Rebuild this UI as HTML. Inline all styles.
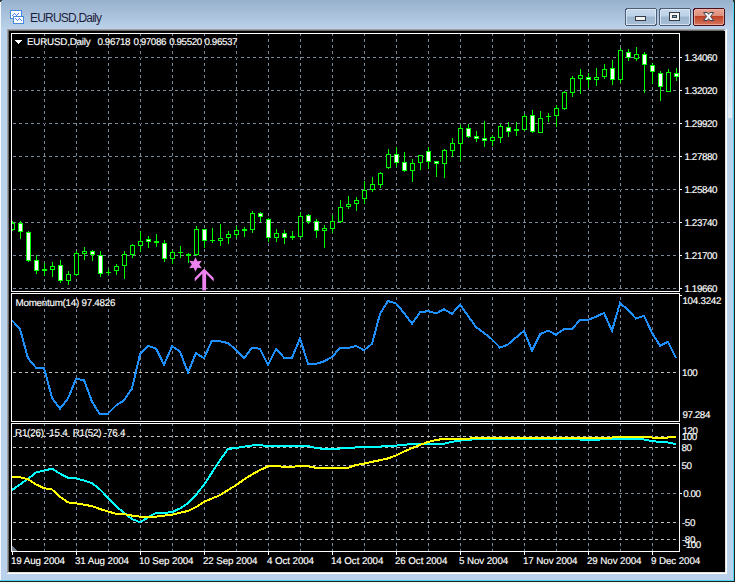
<!DOCTYPE html>
<html><head><meta charset="utf-8"><style>html,body{margin:0;padding:0;background:#fff;}svg{display:block}</style></head>
<body><svg width="737" height="582" viewBox="0 0 737 582" shape-rendering="crispEdges">

<defs><linearGradient id="tg" x1="0" y1="0" x2="0" y2="1"><stop offset="0" stop-color="#97b0cc"/><stop offset="1" stop-color="#bbd2ea"/></linearGradient>
<linearGradient id="bt" x1="0" y1="0" x2="0" y2="1"><stop offset="0" stop-color="#c9daed"/><stop offset="0.45" stop-color="#bcd1e8"/><stop offset="0.5" stop-color="#9db5ce"/><stop offset="1" stop-color="#a9c0d8"/></linearGradient>
<linearGradient id="bc" x1="0" y1="0" x2="0" y2="1"><stop offset="0" stop-color="#eca797"/><stop offset="0.44" stop-color="#de8d7a"/><stop offset="0.47" stop-color="#bf4024"/><stop offset="1" stop-color="#d77a63"/></linearGradient></defs>
<rect x="0" y="0" width="737" height="582" fill="#fff"/>
<rect x="0" y="0" width="735" height="582" fill="#b9d1ea"/>
<rect x="0" y="0" width="735" height="29" fill="url(#tg)"/>
<rect x="0" y="2" width="1" height="578" fill="#f4f8fc"/>
<rect x="733" y="2" width="1" height="578" fill="#4fd6f4"/>
<rect x="734" y="2" width="1" height="580" fill="#202020"/>
<rect x="0" y="580" width="734" height="1" fill="#4fd6f4"/>
<rect x="0" y="581" width="735" height="1" fill="#202020"/>
<path d="M0 0h2v1h-1v1h-1z" fill="#333"/>
<path d="M733 0h2v2h-2z" fill="#333"/>
<linearGradient id="rh" x1="0" y1="0" x2="0" y2="1"><stop offset="0" stop-color="#b9d1ea"/><stop offset="1" stop-color="#e2ecf6"/></linearGradient>
<rect x="728" y="40" width="4" height="78" fill="url(#rh)"/>
<rect x="7" y="29" width="718" height="1" fill="#a0a0a0"/>
<rect x="7" y="29" width="1" height="545" fill="#a0a0a0"/>
<rect x="8" y="30" width="716" height="1" fill="#696969"/>
<rect x="8" y="30" width="1" height="542" fill="#696969"/>
<rect x="7" y="573" width="720" height="1" fill="#fff"/>
<rect x="726" y="29" width="1" height="545" fill="#fff"/>
<rect x="8" y="572" width="718" height="1" fill="#e3e3e3"/>
<rect x="725" y="30" width="1" height="543" fill="#e3e3e3"/>
<!-- icon -->
<rect x="10" y="10" width="12" height="9" fill="#4a86f0"/>
<rect x="11" y="11" width="10" height="7" fill="#fff"/>
<path d="M12 15h1v-1h1v-1h1v1h1v1h1v-1h1v-1h1v1h-1v1h-1v1h-1v-1h-1v-1h-1v1h-1v1h-1z" fill="#4a86f0"/>
<rect x="13" y="16" width="11" height="8" fill="#4a86f0"/>
<rect x="14" y="17" width="9" height="6" fill="#fff"/>
<path d="M15 18h1v1h1v1h1v-1h1v-1h1v1h1v1h1v1h-1v-1h-1v-1h-1v1h-1v1h-1v-1h-1v-1h-1z" fill="#4a86f0"/>
<path d="M11 10h1v1h-1zM15 10h1v1h-1zM19 10h1v1h-1zM10 13h1v1h-1zM10 17h1v1h-1zM13 18h1v1h-1zM14 16h1v1h-1zM18 16h1v1h-1zM22 16h1v1h-1zM23 19h1v1h-1zM13 21h1v1h-1zM16 23h1v1h-1zM20 23h1v1h-1z" fill="#3f9a8c"/>
<text x="30" y="22" font-size="12" letter-spacing="-0.8" fill="#1e1e3c" font-family="Liberation Sans, sans-serif">EURUSD,Daily</text>
<!-- buttons -->
<rect x="625.5" y="8.5" width="31" height="17" rx="2.5" fill="url(#bt)" stroke="#4e5d73"/>
<rect x="626.5" y="9.5" width="29" height="15" rx="1.5" fill="none" stroke="#dfeaf6" stroke-opacity="0.8"/>
<rect x="635.5" y="16.5" width="10" height="4" rx="1" fill="#f4f4f4" stroke="#333a48"/>
<rect x="659.5" y="8.5" width="31" height="17" rx="2.5" fill="url(#bt)" stroke="#4e5d73"/>
<rect x="660.5" y="9.5" width="29" height="15" rx="1.5" fill="none" stroke="#dfeaf6" stroke-opacity="0.8"/>
<rect x="669.5" y="12.5" width="10" height="8" rx="1" fill="#f4f4f4" stroke="#333a48"/>
<rect x="672" y="15" width="5" height="3" fill="#333a48"/>
<rect x="673" y="16" width="3" height="1" fill="#8aa6c8"/>
<rect x="693.5" y="8.5" width="31" height="17" rx="2.5" fill="url(#bc)" stroke="#4a1020"/>
<rect x="694.5" y="9.5" width="29" height="15" rx="1.5" fill="none" stroke="#f0b8a8" stroke-opacity="0.7"/>
<path d="M703.5 12.5H707.3L708.6 14.3L709.9 12.5H713.7L710.6 16.5L713.7 20.5H709.9L708.6 18.7L707.3 20.5H703.5L706.6 16.5Z" fill="#f2f2f2" stroke="#3c4150" stroke-width="1" shape-rendering="geometricPrecision"/>

<defs><clipPath id="cm"><rect x="12" y="34" width="667" height="257"/></clipPath><clipPath id="cmo"><rect x="12" y="294" width="667" height="127"/></clipPath><clipPath id="cr"><rect x="12" y="424" width="667" height="127"/></clipPath></defs><rect x="9" y="31" width="716" height="541" fill="#000"/><path d="M44 34v2h1v-2zM44 39v3h1v-3zM44 45v3h1v-3zM44 51v3h1v-3zM44 57v3h1v-3zM44 63v3h1v-3zM44 69v3h1v-3zM44 75v3h1v-3zM44 81v3h1v-3zM44 87v3h1v-3zM44 93v3h1v-3zM44 99v3h1v-3zM44 105v3h1v-3zM44 111v3h1v-3zM44 117v3h1v-3zM44 123v3h1v-3zM44 129v3h1v-3zM44 135v3h1v-3zM44 141v3h1v-3zM44 147v3h1v-3zM44 153v3h1v-3zM44 159v3h1v-3zM44 165v3h1v-3zM44 171v3h1v-3zM44 177v3h1v-3zM44 183v3h1v-3zM44 189v3h1v-3zM44 195v3h1v-3zM44 201v3h1v-3zM44 207v3h1v-3zM44 213v3h1v-3zM44 219v3h1v-3zM44 225v3h1v-3zM44 231v3h1v-3zM44 237v3h1v-3zM44 243v3h1v-3zM44 249v3h1v-3zM44 255v3h1v-3zM44 261v3h1v-3zM44 267v3h1v-3zM44 273v3h1v-3zM44 279v3h1v-3zM44 285v3h1v-3zM76 34v2h1v-2zM76 39v3h1v-3zM76 45v3h1v-3zM76 51v3h1v-3zM76 57v3h1v-3zM76 63v3h1v-3zM76 69v3h1v-3zM76 75v3h1v-3zM76 81v3h1v-3zM76 87v3h1v-3zM76 93v3h1v-3zM76 99v3h1v-3zM76 105v3h1v-3zM76 111v3h1v-3zM76 117v3h1v-3zM76 123v3h1v-3zM76 129v3h1v-3zM76 135v3h1v-3zM76 141v3h1v-3zM76 147v3h1v-3zM76 153v3h1v-3zM76 159v3h1v-3zM76 165v3h1v-3zM76 171v3h1v-3zM76 177v3h1v-3zM76 183v3h1v-3zM76 189v3h1v-3zM76 195v3h1v-3zM76 201v3h1v-3zM76 207v3h1v-3zM76 213v3h1v-3zM76 219v3h1v-3zM76 225v3h1v-3zM76 231v3h1v-3zM76 237v3h1v-3zM76 243v3h1v-3zM76 249v3h1v-3zM76 255v3h1v-3zM76 261v3h1v-3zM76 267v3h1v-3zM76 273v3h1v-3zM76 279v3h1v-3zM76 285v3h1v-3zM108 34v2h1v-2zM108 39v3h1v-3zM108 45v3h1v-3zM108 51v3h1v-3zM108 57v3h1v-3zM108 63v3h1v-3zM108 69v3h1v-3zM108 75v3h1v-3zM108 81v3h1v-3zM108 87v3h1v-3zM108 93v3h1v-3zM108 99v3h1v-3zM108 105v3h1v-3zM108 111v3h1v-3zM108 117v3h1v-3zM108 123v3h1v-3zM108 129v3h1v-3zM108 135v3h1v-3zM108 141v3h1v-3zM108 147v3h1v-3zM108 153v3h1v-3zM108 159v3h1v-3zM108 165v3h1v-3zM108 171v3h1v-3zM108 177v3h1v-3zM108 183v3h1v-3zM108 189v3h1v-3zM108 195v3h1v-3zM108 201v3h1v-3zM108 207v3h1v-3zM108 213v3h1v-3zM108 219v3h1v-3zM108 225v3h1v-3zM108 231v3h1v-3zM108 237v3h1v-3zM108 243v3h1v-3zM108 249v3h1v-3zM108 255v3h1v-3zM108 261v3h1v-3zM108 267v3h1v-3zM108 273v3h1v-3zM108 279v3h1v-3zM108 285v3h1v-3zM140 34v2h1v-2zM140 39v3h1v-3zM140 45v3h1v-3zM140 51v3h1v-3zM140 57v3h1v-3zM140 63v3h1v-3zM140 69v3h1v-3zM140 75v3h1v-3zM140 81v3h1v-3zM140 87v3h1v-3zM140 93v3h1v-3zM140 99v3h1v-3zM140 105v3h1v-3zM140 111v3h1v-3zM140 117v3h1v-3zM140 123v3h1v-3zM140 129v3h1v-3zM140 135v3h1v-3zM140 141v3h1v-3zM140 147v3h1v-3zM140 153v3h1v-3zM140 159v3h1v-3zM140 165v3h1v-3zM140 171v3h1v-3zM140 177v3h1v-3zM140 183v3h1v-3zM140 189v3h1v-3zM140 195v3h1v-3zM140 201v3h1v-3zM140 207v3h1v-3zM140 213v3h1v-3zM140 219v3h1v-3zM140 225v3h1v-3zM140 231v3h1v-3zM140 237v3h1v-3zM140 243v3h1v-3zM140 249v3h1v-3zM140 255v3h1v-3zM140 261v3h1v-3zM140 267v3h1v-3zM140 273v3h1v-3zM140 279v3h1v-3zM140 285v3h1v-3zM172 34v2h1v-2zM172 39v3h1v-3zM172 45v3h1v-3zM172 51v3h1v-3zM172 57v3h1v-3zM172 63v3h1v-3zM172 69v3h1v-3zM172 75v3h1v-3zM172 81v3h1v-3zM172 87v3h1v-3zM172 93v3h1v-3zM172 99v3h1v-3zM172 105v3h1v-3zM172 111v3h1v-3zM172 117v3h1v-3zM172 123v3h1v-3zM172 129v3h1v-3zM172 135v3h1v-3zM172 141v3h1v-3zM172 147v3h1v-3zM172 153v3h1v-3zM172 159v3h1v-3zM172 165v3h1v-3zM172 171v3h1v-3zM172 177v3h1v-3zM172 183v3h1v-3zM172 189v3h1v-3zM172 195v3h1v-3zM172 201v3h1v-3zM172 207v3h1v-3zM172 213v3h1v-3zM172 219v3h1v-3zM172 225v3h1v-3zM172 231v3h1v-3zM172 237v3h1v-3zM172 243v3h1v-3zM172 249v3h1v-3zM172 255v3h1v-3zM172 261v3h1v-3zM172 267v3h1v-3zM172 273v3h1v-3zM172 279v3h1v-3zM172 285v3h1v-3zM204 34v2h1v-2zM204 39v3h1v-3zM204 45v3h1v-3zM204 51v3h1v-3zM204 57v3h1v-3zM204 63v3h1v-3zM204 69v3h1v-3zM204 75v3h1v-3zM204 81v3h1v-3zM204 87v3h1v-3zM204 93v3h1v-3zM204 99v3h1v-3zM204 105v3h1v-3zM204 111v3h1v-3zM204 117v3h1v-3zM204 123v3h1v-3zM204 129v3h1v-3zM204 135v3h1v-3zM204 141v3h1v-3zM204 147v3h1v-3zM204 153v3h1v-3zM204 159v3h1v-3zM204 165v3h1v-3zM204 171v3h1v-3zM204 177v3h1v-3zM204 183v3h1v-3zM204 189v3h1v-3zM204 195v3h1v-3zM204 201v3h1v-3zM204 207v3h1v-3zM204 213v3h1v-3zM204 219v3h1v-3zM204 225v3h1v-3zM204 231v3h1v-3zM204 237v3h1v-3zM204 243v3h1v-3zM204 249v3h1v-3zM204 255v3h1v-3zM204 261v3h1v-3zM204 267v3h1v-3zM204 273v3h1v-3zM204 279v3h1v-3zM204 285v3h1v-3zM236 34v2h1v-2zM236 39v3h1v-3zM236 45v3h1v-3zM236 51v3h1v-3zM236 57v3h1v-3zM236 63v3h1v-3zM236 69v3h1v-3zM236 75v3h1v-3zM236 81v3h1v-3zM236 87v3h1v-3zM236 93v3h1v-3zM236 99v3h1v-3zM236 105v3h1v-3zM236 111v3h1v-3zM236 117v3h1v-3zM236 123v3h1v-3zM236 129v3h1v-3zM236 135v3h1v-3zM236 141v3h1v-3zM236 147v3h1v-3zM236 153v3h1v-3zM236 159v3h1v-3zM236 165v3h1v-3zM236 171v3h1v-3zM236 177v3h1v-3zM236 183v3h1v-3zM236 189v3h1v-3zM236 195v3h1v-3zM236 201v3h1v-3zM236 207v3h1v-3zM236 213v3h1v-3zM236 219v3h1v-3zM236 225v3h1v-3zM236 231v3h1v-3zM236 237v3h1v-3zM236 243v3h1v-3zM236 249v3h1v-3zM236 255v3h1v-3zM236 261v3h1v-3zM236 267v3h1v-3zM236 273v3h1v-3zM236 279v3h1v-3zM236 285v3h1v-3zM268 34v2h1v-2zM268 39v3h1v-3zM268 45v3h1v-3zM268 51v3h1v-3zM268 57v3h1v-3zM268 63v3h1v-3zM268 69v3h1v-3zM268 75v3h1v-3zM268 81v3h1v-3zM268 87v3h1v-3zM268 93v3h1v-3zM268 99v3h1v-3zM268 105v3h1v-3zM268 111v3h1v-3zM268 117v3h1v-3zM268 123v3h1v-3zM268 129v3h1v-3zM268 135v3h1v-3zM268 141v3h1v-3zM268 147v3h1v-3zM268 153v3h1v-3zM268 159v3h1v-3zM268 165v3h1v-3zM268 171v3h1v-3zM268 177v3h1v-3zM268 183v3h1v-3zM268 189v3h1v-3zM268 195v3h1v-3zM268 201v3h1v-3zM268 207v3h1v-3zM268 213v3h1v-3zM268 219v3h1v-3zM268 225v3h1v-3zM268 231v3h1v-3zM268 237v3h1v-3zM268 243v3h1v-3zM268 249v3h1v-3zM268 255v3h1v-3zM268 261v3h1v-3zM268 267v3h1v-3zM268 273v3h1v-3zM268 279v3h1v-3zM268 285v3h1v-3zM300 34v2h1v-2zM300 39v3h1v-3zM300 45v3h1v-3zM300 51v3h1v-3zM300 57v3h1v-3zM300 63v3h1v-3zM300 69v3h1v-3zM300 75v3h1v-3zM300 81v3h1v-3zM300 87v3h1v-3zM300 93v3h1v-3zM300 99v3h1v-3zM300 105v3h1v-3zM300 111v3h1v-3zM300 117v3h1v-3zM300 123v3h1v-3zM300 129v3h1v-3zM300 135v3h1v-3zM300 141v3h1v-3zM300 147v3h1v-3zM300 153v3h1v-3zM300 159v3h1v-3zM300 165v3h1v-3zM300 171v3h1v-3zM300 177v3h1v-3zM300 183v3h1v-3zM300 189v3h1v-3zM300 195v3h1v-3zM300 201v3h1v-3zM300 207v3h1v-3zM300 213v3h1v-3zM300 219v3h1v-3zM300 225v3h1v-3zM300 231v3h1v-3zM300 237v3h1v-3zM300 243v3h1v-3zM300 249v3h1v-3zM300 255v3h1v-3zM300 261v3h1v-3zM300 267v3h1v-3zM300 273v3h1v-3zM300 279v3h1v-3zM300 285v3h1v-3zM332 34v2h1v-2zM332 39v3h1v-3zM332 45v3h1v-3zM332 51v3h1v-3zM332 57v3h1v-3zM332 63v3h1v-3zM332 69v3h1v-3zM332 75v3h1v-3zM332 81v3h1v-3zM332 87v3h1v-3zM332 93v3h1v-3zM332 99v3h1v-3zM332 105v3h1v-3zM332 111v3h1v-3zM332 117v3h1v-3zM332 123v3h1v-3zM332 129v3h1v-3zM332 135v3h1v-3zM332 141v3h1v-3zM332 147v3h1v-3zM332 153v3h1v-3zM332 159v3h1v-3zM332 165v3h1v-3zM332 171v3h1v-3zM332 177v3h1v-3zM332 183v3h1v-3zM332 189v3h1v-3zM332 195v3h1v-3zM332 201v3h1v-3zM332 207v3h1v-3zM332 213v3h1v-3zM332 219v3h1v-3zM332 225v3h1v-3zM332 231v3h1v-3zM332 237v3h1v-3zM332 243v3h1v-3zM332 249v3h1v-3zM332 255v3h1v-3zM332 261v3h1v-3zM332 267v3h1v-3zM332 273v3h1v-3zM332 279v3h1v-3zM332 285v3h1v-3zM364 34v2h1v-2zM364 39v3h1v-3zM364 45v3h1v-3zM364 51v3h1v-3zM364 57v3h1v-3zM364 63v3h1v-3zM364 69v3h1v-3zM364 75v3h1v-3zM364 81v3h1v-3zM364 87v3h1v-3zM364 93v3h1v-3zM364 99v3h1v-3zM364 105v3h1v-3zM364 111v3h1v-3zM364 117v3h1v-3zM364 123v3h1v-3zM364 129v3h1v-3zM364 135v3h1v-3zM364 141v3h1v-3zM364 147v3h1v-3zM364 153v3h1v-3zM364 159v3h1v-3zM364 165v3h1v-3zM364 171v3h1v-3zM364 177v3h1v-3zM364 183v3h1v-3zM364 189v3h1v-3zM364 195v3h1v-3zM364 201v3h1v-3zM364 207v3h1v-3zM364 213v3h1v-3zM364 219v3h1v-3zM364 225v3h1v-3zM364 231v3h1v-3zM364 237v3h1v-3zM364 243v3h1v-3zM364 249v3h1v-3zM364 255v3h1v-3zM364 261v3h1v-3zM364 267v3h1v-3zM364 273v3h1v-3zM364 279v3h1v-3zM364 285v3h1v-3zM396 34v2h1v-2zM396 39v3h1v-3zM396 45v3h1v-3zM396 51v3h1v-3zM396 57v3h1v-3zM396 63v3h1v-3zM396 69v3h1v-3zM396 75v3h1v-3zM396 81v3h1v-3zM396 87v3h1v-3zM396 93v3h1v-3zM396 99v3h1v-3zM396 105v3h1v-3zM396 111v3h1v-3zM396 117v3h1v-3zM396 123v3h1v-3zM396 129v3h1v-3zM396 135v3h1v-3zM396 141v3h1v-3zM396 147v3h1v-3zM396 153v3h1v-3zM396 159v3h1v-3zM396 165v3h1v-3zM396 171v3h1v-3zM396 177v3h1v-3zM396 183v3h1v-3zM396 189v3h1v-3zM396 195v3h1v-3zM396 201v3h1v-3zM396 207v3h1v-3zM396 213v3h1v-3zM396 219v3h1v-3zM396 225v3h1v-3zM396 231v3h1v-3zM396 237v3h1v-3zM396 243v3h1v-3zM396 249v3h1v-3zM396 255v3h1v-3zM396 261v3h1v-3zM396 267v3h1v-3zM396 273v3h1v-3zM396 279v3h1v-3zM396 285v3h1v-3zM428 34v2h1v-2zM428 39v3h1v-3zM428 45v3h1v-3zM428 51v3h1v-3zM428 57v3h1v-3zM428 63v3h1v-3zM428 69v3h1v-3zM428 75v3h1v-3zM428 81v3h1v-3zM428 87v3h1v-3zM428 93v3h1v-3zM428 99v3h1v-3zM428 105v3h1v-3zM428 111v3h1v-3zM428 117v3h1v-3zM428 123v3h1v-3zM428 129v3h1v-3zM428 135v3h1v-3zM428 141v3h1v-3zM428 147v3h1v-3zM428 153v3h1v-3zM428 159v3h1v-3zM428 165v3h1v-3zM428 171v3h1v-3zM428 177v3h1v-3zM428 183v3h1v-3zM428 189v3h1v-3zM428 195v3h1v-3zM428 201v3h1v-3zM428 207v3h1v-3zM428 213v3h1v-3zM428 219v3h1v-3zM428 225v3h1v-3zM428 231v3h1v-3zM428 237v3h1v-3zM428 243v3h1v-3zM428 249v3h1v-3zM428 255v3h1v-3zM428 261v3h1v-3zM428 267v3h1v-3zM428 273v3h1v-3zM428 279v3h1v-3zM428 285v3h1v-3zM460 34v2h1v-2zM460 39v3h1v-3zM460 45v3h1v-3zM460 51v3h1v-3zM460 57v3h1v-3zM460 63v3h1v-3zM460 69v3h1v-3zM460 75v3h1v-3zM460 81v3h1v-3zM460 87v3h1v-3zM460 93v3h1v-3zM460 99v3h1v-3zM460 105v3h1v-3zM460 111v3h1v-3zM460 117v3h1v-3zM460 123v3h1v-3zM460 129v3h1v-3zM460 135v3h1v-3zM460 141v3h1v-3zM460 147v3h1v-3zM460 153v3h1v-3zM460 159v3h1v-3zM460 165v3h1v-3zM460 171v3h1v-3zM460 177v3h1v-3zM460 183v3h1v-3zM460 189v3h1v-3zM460 195v3h1v-3zM460 201v3h1v-3zM460 207v3h1v-3zM460 213v3h1v-3zM460 219v3h1v-3zM460 225v3h1v-3zM460 231v3h1v-3zM460 237v3h1v-3zM460 243v3h1v-3zM460 249v3h1v-3zM460 255v3h1v-3zM460 261v3h1v-3zM460 267v3h1v-3zM460 273v3h1v-3zM460 279v3h1v-3zM460 285v3h1v-3zM492 34v2h1v-2zM492 39v3h1v-3zM492 45v3h1v-3zM492 51v3h1v-3zM492 57v3h1v-3zM492 63v3h1v-3zM492 69v3h1v-3zM492 75v3h1v-3zM492 81v3h1v-3zM492 87v3h1v-3zM492 93v3h1v-3zM492 99v3h1v-3zM492 105v3h1v-3zM492 111v3h1v-3zM492 117v3h1v-3zM492 123v3h1v-3zM492 129v3h1v-3zM492 135v3h1v-3zM492 141v3h1v-3zM492 147v3h1v-3zM492 153v3h1v-3zM492 159v3h1v-3zM492 165v3h1v-3zM492 171v3h1v-3zM492 177v3h1v-3zM492 183v3h1v-3zM492 189v3h1v-3zM492 195v3h1v-3zM492 201v3h1v-3zM492 207v3h1v-3zM492 213v3h1v-3zM492 219v3h1v-3zM492 225v3h1v-3zM492 231v3h1v-3zM492 237v3h1v-3zM492 243v3h1v-3zM492 249v3h1v-3zM492 255v3h1v-3zM492 261v3h1v-3zM492 267v3h1v-3zM492 273v3h1v-3zM492 279v3h1v-3zM492 285v3h1v-3zM524 34v2h1v-2zM524 39v3h1v-3zM524 45v3h1v-3zM524 51v3h1v-3zM524 57v3h1v-3zM524 63v3h1v-3zM524 69v3h1v-3zM524 75v3h1v-3zM524 81v3h1v-3zM524 87v3h1v-3zM524 93v3h1v-3zM524 99v3h1v-3zM524 105v3h1v-3zM524 111v3h1v-3zM524 117v3h1v-3zM524 123v3h1v-3zM524 129v3h1v-3zM524 135v3h1v-3zM524 141v3h1v-3zM524 147v3h1v-3zM524 153v3h1v-3zM524 159v3h1v-3zM524 165v3h1v-3zM524 171v3h1v-3zM524 177v3h1v-3zM524 183v3h1v-3zM524 189v3h1v-3zM524 195v3h1v-3zM524 201v3h1v-3zM524 207v3h1v-3zM524 213v3h1v-3zM524 219v3h1v-3zM524 225v3h1v-3zM524 231v3h1v-3zM524 237v3h1v-3zM524 243v3h1v-3zM524 249v3h1v-3zM524 255v3h1v-3zM524 261v3h1v-3zM524 267v3h1v-3zM524 273v3h1v-3zM524 279v3h1v-3zM524 285v3h1v-3zM556 34v2h1v-2zM556 39v3h1v-3zM556 45v3h1v-3zM556 51v3h1v-3zM556 57v3h1v-3zM556 63v3h1v-3zM556 69v3h1v-3zM556 75v3h1v-3zM556 81v3h1v-3zM556 87v3h1v-3zM556 93v3h1v-3zM556 99v3h1v-3zM556 105v3h1v-3zM556 111v3h1v-3zM556 117v3h1v-3zM556 123v3h1v-3zM556 129v3h1v-3zM556 135v3h1v-3zM556 141v3h1v-3zM556 147v3h1v-3zM556 153v3h1v-3zM556 159v3h1v-3zM556 165v3h1v-3zM556 171v3h1v-3zM556 177v3h1v-3zM556 183v3h1v-3zM556 189v3h1v-3zM556 195v3h1v-3zM556 201v3h1v-3zM556 207v3h1v-3zM556 213v3h1v-3zM556 219v3h1v-3zM556 225v3h1v-3zM556 231v3h1v-3zM556 237v3h1v-3zM556 243v3h1v-3zM556 249v3h1v-3zM556 255v3h1v-3zM556 261v3h1v-3zM556 267v3h1v-3zM556 273v3h1v-3zM556 279v3h1v-3zM556 285v3h1v-3zM588 34v2h1v-2zM588 39v3h1v-3zM588 45v3h1v-3zM588 51v3h1v-3zM588 57v3h1v-3zM588 63v3h1v-3zM588 69v3h1v-3zM588 75v3h1v-3zM588 81v3h1v-3zM588 87v3h1v-3zM588 93v3h1v-3zM588 99v3h1v-3zM588 105v3h1v-3zM588 111v3h1v-3zM588 117v3h1v-3zM588 123v3h1v-3zM588 129v3h1v-3zM588 135v3h1v-3zM588 141v3h1v-3zM588 147v3h1v-3zM588 153v3h1v-3zM588 159v3h1v-3zM588 165v3h1v-3zM588 171v3h1v-3zM588 177v3h1v-3zM588 183v3h1v-3zM588 189v3h1v-3zM588 195v3h1v-3zM588 201v3h1v-3zM588 207v3h1v-3zM588 213v3h1v-3zM588 219v3h1v-3zM588 225v3h1v-3zM588 231v3h1v-3zM588 237v3h1v-3zM588 243v3h1v-3zM588 249v3h1v-3zM588 255v3h1v-3zM588 261v3h1v-3zM588 267v3h1v-3zM588 273v3h1v-3zM588 279v3h1v-3zM588 285v3h1v-3zM620 34v2h1v-2zM620 39v3h1v-3zM620 45v3h1v-3zM620 51v3h1v-3zM620 57v3h1v-3zM620 63v3h1v-3zM620 69v3h1v-3zM620 75v3h1v-3zM620 81v3h1v-3zM620 87v3h1v-3zM620 93v3h1v-3zM620 99v3h1v-3zM620 105v3h1v-3zM620 111v3h1v-3zM620 117v3h1v-3zM620 123v3h1v-3zM620 129v3h1v-3zM620 135v3h1v-3zM620 141v3h1v-3zM620 147v3h1v-3zM620 153v3h1v-3zM620 159v3h1v-3zM620 165v3h1v-3zM620 171v3h1v-3zM620 177v3h1v-3zM620 183v3h1v-3zM620 189v3h1v-3zM620 195v3h1v-3zM620 201v3h1v-3zM620 207v3h1v-3zM620 213v3h1v-3zM620 219v3h1v-3zM620 225v3h1v-3zM620 231v3h1v-3zM620 237v3h1v-3zM620 243v3h1v-3zM620 249v3h1v-3zM620 255v3h1v-3zM620 261v3h1v-3zM620 267v3h1v-3zM620 273v3h1v-3zM620 279v3h1v-3zM620 285v3h1v-3zM652 34v2h1v-2zM652 39v3h1v-3zM652 45v3h1v-3zM652 51v3h1v-3zM652 57v3h1v-3zM652 63v3h1v-3zM652 69v3h1v-3zM652 75v3h1v-3zM652 81v3h1v-3zM652 87v3h1v-3zM652 93v3h1v-3zM652 99v3h1v-3zM652 105v3h1v-3zM652 111v3h1v-3zM652 117v3h1v-3zM652 123v3h1v-3zM652 129v3h1v-3zM652 135v3h1v-3zM652 141v3h1v-3zM652 147v3h1v-3zM652 153v3h1v-3zM652 159v3h1v-3zM652 165v3h1v-3zM652 171v3h1v-3zM652 177v3h1v-3zM652 183v3h1v-3zM652 189v3h1v-3zM652 195v3h1v-3zM652 201v3h1v-3zM652 207v3h1v-3zM652 213v3h1v-3zM652 219v3h1v-3zM652 225v3h1v-3zM652 231v3h1v-3zM652 237v3h1v-3zM652 243v3h1v-3zM652 249v3h1v-3zM652 255v3h1v-3zM652 261v3h1v-3zM652 267v3h1v-3zM652 273v3h1v-3zM652 279v3h1v-3zM652 285v3h1v-3zM44 297v3h1v-3zM44 303v3h1v-3zM44 309v3h1v-3zM44 315v3h1v-3zM44 321v3h1v-3zM44 327v3h1v-3zM44 333v3h1v-3zM44 339v3h1v-3zM44 345v3h1v-3zM44 351v3h1v-3zM44 357v3h1v-3zM44 363v3h1v-3zM44 369v3h1v-3zM44 375v3h1v-3zM44 381v3h1v-3zM44 387v3h1v-3zM44 393v3h1v-3zM44 399v3h1v-3zM44 405v3h1v-3zM44 411v3h1v-3zM44 417v3h1v-3zM76 297v3h1v-3zM76 303v3h1v-3zM76 309v3h1v-3zM76 315v3h1v-3zM76 321v3h1v-3zM76 327v3h1v-3zM76 333v3h1v-3zM76 339v3h1v-3zM76 345v3h1v-3zM76 351v3h1v-3zM76 357v3h1v-3zM76 363v3h1v-3zM76 369v3h1v-3zM76 375v3h1v-3zM76 381v3h1v-3zM76 387v3h1v-3zM76 393v3h1v-3zM76 399v3h1v-3zM76 405v3h1v-3zM76 411v3h1v-3zM76 417v3h1v-3zM108 297v3h1v-3zM108 303v3h1v-3zM108 309v3h1v-3zM108 315v3h1v-3zM108 321v3h1v-3zM108 327v3h1v-3zM108 333v3h1v-3zM108 339v3h1v-3zM108 345v3h1v-3zM108 351v3h1v-3zM108 357v3h1v-3zM108 363v3h1v-3zM108 369v3h1v-3zM108 375v3h1v-3zM108 381v3h1v-3zM108 387v3h1v-3zM108 393v3h1v-3zM108 399v3h1v-3zM108 405v3h1v-3zM108 411v3h1v-3zM108 417v3h1v-3zM140 297v3h1v-3zM140 303v3h1v-3zM140 309v3h1v-3zM140 315v3h1v-3zM140 321v3h1v-3zM140 327v3h1v-3zM140 333v3h1v-3zM140 339v3h1v-3zM140 345v3h1v-3zM140 351v3h1v-3zM140 357v3h1v-3zM140 363v3h1v-3zM140 369v3h1v-3zM140 375v3h1v-3zM140 381v3h1v-3zM140 387v3h1v-3zM140 393v3h1v-3zM140 399v3h1v-3zM140 405v3h1v-3zM140 411v3h1v-3zM140 417v3h1v-3zM172 297v3h1v-3zM172 303v3h1v-3zM172 309v3h1v-3zM172 315v3h1v-3zM172 321v3h1v-3zM172 327v3h1v-3zM172 333v3h1v-3zM172 339v3h1v-3zM172 345v3h1v-3zM172 351v3h1v-3zM172 357v3h1v-3zM172 363v3h1v-3zM172 369v3h1v-3zM172 375v3h1v-3zM172 381v3h1v-3zM172 387v3h1v-3zM172 393v3h1v-3zM172 399v3h1v-3zM172 405v3h1v-3zM172 411v3h1v-3zM172 417v3h1v-3zM204 297v3h1v-3zM204 303v3h1v-3zM204 309v3h1v-3zM204 315v3h1v-3zM204 321v3h1v-3zM204 327v3h1v-3zM204 333v3h1v-3zM204 339v3h1v-3zM204 345v3h1v-3zM204 351v3h1v-3zM204 357v3h1v-3zM204 363v3h1v-3zM204 369v3h1v-3zM204 375v3h1v-3zM204 381v3h1v-3zM204 387v3h1v-3zM204 393v3h1v-3zM204 399v3h1v-3zM204 405v3h1v-3zM204 411v3h1v-3zM204 417v3h1v-3zM236 297v3h1v-3zM236 303v3h1v-3zM236 309v3h1v-3zM236 315v3h1v-3zM236 321v3h1v-3zM236 327v3h1v-3zM236 333v3h1v-3zM236 339v3h1v-3zM236 345v3h1v-3zM236 351v3h1v-3zM236 357v3h1v-3zM236 363v3h1v-3zM236 369v3h1v-3zM236 375v3h1v-3zM236 381v3h1v-3zM236 387v3h1v-3zM236 393v3h1v-3zM236 399v3h1v-3zM236 405v3h1v-3zM236 411v3h1v-3zM236 417v3h1v-3zM268 297v3h1v-3zM268 303v3h1v-3zM268 309v3h1v-3zM268 315v3h1v-3zM268 321v3h1v-3zM268 327v3h1v-3zM268 333v3h1v-3zM268 339v3h1v-3zM268 345v3h1v-3zM268 351v3h1v-3zM268 357v3h1v-3zM268 363v3h1v-3zM268 369v3h1v-3zM268 375v3h1v-3zM268 381v3h1v-3zM268 387v3h1v-3zM268 393v3h1v-3zM268 399v3h1v-3zM268 405v3h1v-3zM268 411v3h1v-3zM268 417v3h1v-3zM300 297v3h1v-3zM300 303v3h1v-3zM300 309v3h1v-3zM300 315v3h1v-3zM300 321v3h1v-3zM300 327v3h1v-3zM300 333v3h1v-3zM300 339v3h1v-3zM300 345v3h1v-3zM300 351v3h1v-3zM300 357v3h1v-3zM300 363v3h1v-3zM300 369v3h1v-3zM300 375v3h1v-3zM300 381v3h1v-3zM300 387v3h1v-3zM300 393v3h1v-3zM300 399v3h1v-3zM300 405v3h1v-3zM300 411v3h1v-3zM300 417v3h1v-3zM332 297v3h1v-3zM332 303v3h1v-3zM332 309v3h1v-3zM332 315v3h1v-3zM332 321v3h1v-3zM332 327v3h1v-3zM332 333v3h1v-3zM332 339v3h1v-3zM332 345v3h1v-3zM332 351v3h1v-3zM332 357v3h1v-3zM332 363v3h1v-3zM332 369v3h1v-3zM332 375v3h1v-3zM332 381v3h1v-3zM332 387v3h1v-3zM332 393v3h1v-3zM332 399v3h1v-3zM332 405v3h1v-3zM332 411v3h1v-3zM332 417v3h1v-3zM364 297v3h1v-3zM364 303v3h1v-3zM364 309v3h1v-3zM364 315v3h1v-3zM364 321v3h1v-3zM364 327v3h1v-3zM364 333v3h1v-3zM364 339v3h1v-3zM364 345v3h1v-3zM364 351v3h1v-3zM364 357v3h1v-3zM364 363v3h1v-3zM364 369v3h1v-3zM364 375v3h1v-3zM364 381v3h1v-3zM364 387v3h1v-3zM364 393v3h1v-3zM364 399v3h1v-3zM364 405v3h1v-3zM364 411v3h1v-3zM364 417v3h1v-3zM396 297v3h1v-3zM396 303v3h1v-3zM396 309v3h1v-3zM396 315v3h1v-3zM396 321v3h1v-3zM396 327v3h1v-3zM396 333v3h1v-3zM396 339v3h1v-3zM396 345v3h1v-3zM396 351v3h1v-3zM396 357v3h1v-3zM396 363v3h1v-3zM396 369v3h1v-3zM396 375v3h1v-3zM396 381v3h1v-3zM396 387v3h1v-3zM396 393v3h1v-3zM396 399v3h1v-3zM396 405v3h1v-3zM396 411v3h1v-3zM396 417v3h1v-3zM428 297v3h1v-3zM428 303v3h1v-3zM428 309v3h1v-3zM428 315v3h1v-3zM428 321v3h1v-3zM428 327v3h1v-3zM428 333v3h1v-3zM428 339v3h1v-3zM428 345v3h1v-3zM428 351v3h1v-3zM428 357v3h1v-3zM428 363v3h1v-3zM428 369v3h1v-3zM428 375v3h1v-3zM428 381v3h1v-3zM428 387v3h1v-3zM428 393v3h1v-3zM428 399v3h1v-3zM428 405v3h1v-3zM428 411v3h1v-3zM428 417v3h1v-3zM460 297v3h1v-3zM460 303v3h1v-3zM460 309v3h1v-3zM460 315v3h1v-3zM460 321v3h1v-3zM460 327v3h1v-3zM460 333v3h1v-3zM460 339v3h1v-3zM460 345v3h1v-3zM460 351v3h1v-3zM460 357v3h1v-3zM460 363v3h1v-3zM460 369v3h1v-3zM460 375v3h1v-3zM460 381v3h1v-3zM460 387v3h1v-3zM460 393v3h1v-3zM460 399v3h1v-3zM460 405v3h1v-3zM460 411v3h1v-3zM460 417v3h1v-3zM492 297v3h1v-3zM492 303v3h1v-3zM492 309v3h1v-3zM492 315v3h1v-3zM492 321v3h1v-3zM492 327v3h1v-3zM492 333v3h1v-3zM492 339v3h1v-3zM492 345v3h1v-3zM492 351v3h1v-3zM492 357v3h1v-3zM492 363v3h1v-3zM492 369v3h1v-3zM492 375v3h1v-3zM492 381v3h1v-3zM492 387v3h1v-3zM492 393v3h1v-3zM492 399v3h1v-3zM492 405v3h1v-3zM492 411v3h1v-3zM492 417v3h1v-3zM524 297v3h1v-3zM524 303v3h1v-3zM524 309v3h1v-3zM524 315v3h1v-3zM524 321v3h1v-3zM524 327v3h1v-3zM524 333v3h1v-3zM524 339v3h1v-3zM524 345v3h1v-3zM524 351v3h1v-3zM524 357v3h1v-3zM524 363v3h1v-3zM524 369v3h1v-3zM524 375v3h1v-3zM524 381v3h1v-3zM524 387v3h1v-3zM524 393v3h1v-3zM524 399v3h1v-3zM524 405v3h1v-3zM524 411v3h1v-3zM524 417v3h1v-3zM556 297v3h1v-3zM556 303v3h1v-3zM556 309v3h1v-3zM556 315v3h1v-3zM556 321v3h1v-3zM556 327v3h1v-3zM556 333v3h1v-3zM556 339v3h1v-3zM556 345v3h1v-3zM556 351v3h1v-3zM556 357v3h1v-3zM556 363v3h1v-3zM556 369v3h1v-3zM556 375v3h1v-3zM556 381v3h1v-3zM556 387v3h1v-3zM556 393v3h1v-3zM556 399v3h1v-3zM556 405v3h1v-3zM556 411v3h1v-3zM556 417v3h1v-3zM588 297v3h1v-3zM588 303v3h1v-3zM588 309v3h1v-3zM588 315v3h1v-3zM588 321v3h1v-3zM588 327v3h1v-3zM588 333v3h1v-3zM588 339v3h1v-3zM588 345v3h1v-3zM588 351v3h1v-3zM588 357v3h1v-3zM588 363v3h1v-3zM588 369v3h1v-3zM588 375v3h1v-3zM588 381v3h1v-3zM588 387v3h1v-3zM588 393v3h1v-3zM588 399v3h1v-3zM588 405v3h1v-3zM588 411v3h1v-3zM588 417v3h1v-3zM620 297v3h1v-3zM620 303v3h1v-3zM620 309v3h1v-3zM620 315v3h1v-3zM620 321v3h1v-3zM620 327v3h1v-3zM620 333v3h1v-3zM620 339v3h1v-3zM620 345v3h1v-3zM620 351v3h1v-3zM620 357v3h1v-3zM620 363v3h1v-3zM620 369v3h1v-3zM620 375v3h1v-3zM620 381v3h1v-3zM620 387v3h1v-3zM620 393v3h1v-3zM620 399v3h1v-3zM620 405v3h1v-3zM620 411v3h1v-3zM620 417v3h1v-3zM652 297v3h1v-3zM652 303v3h1v-3zM652 309v3h1v-3zM652 315v3h1v-3zM652 321v3h1v-3zM652 327v3h1v-3zM652 333v3h1v-3zM652 339v3h1v-3zM652 345v3h1v-3zM652 351v3h1v-3zM652 357v3h1v-3zM652 363v3h1v-3zM652 369v3h1v-3zM652 375v3h1v-3zM652 381v3h1v-3zM652 387v3h1v-3zM652 393v3h1v-3zM652 399v3h1v-3zM652 405v3h1v-3zM652 411v3h1v-3zM652 417v3h1v-3zM44 424v2h1v-2zM44 429v3h1v-3zM44 435v3h1v-3zM44 441v3h1v-3zM44 447v3h1v-3zM44 453v3h1v-3zM44 459v3h1v-3zM44 465v3h1v-3zM44 471v3h1v-3zM44 477v3h1v-3zM44 483v3h1v-3zM44 489v3h1v-3zM44 495v3h1v-3zM44 501v3h1v-3zM44 507v3h1v-3zM44 513v3h1v-3zM44 519v3h1v-3zM44 525v3h1v-3zM44 531v3h1v-3zM44 537v3h1v-3zM44 543v3h1v-3zM44 549v2h1v-2zM76 424v2h1v-2zM76 429v3h1v-3zM76 435v3h1v-3zM76 441v3h1v-3zM76 447v3h1v-3zM76 453v3h1v-3zM76 459v3h1v-3zM76 465v3h1v-3zM76 471v3h1v-3zM76 477v3h1v-3zM76 483v3h1v-3zM76 489v3h1v-3zM76 495v3h1v-3zM76 501v3h1v-3zM76 507v3h1v-3zM76 513v3h1v-3zM76 519v3h1v-3zM76 525v3h1v-3zM76 531v3h1v-3zM76 537v3h1v-3zM76 543v3h1v-3zM76 549v2h1v-2zM108 424v2h1v-2zM108 429v3h1v-3zM108 435v3h1v-3zM108 441v3h1v-3zM108 447v3h1v-3zM108 453v3h1v-3zM108 459v3h1v-3zM108 465v3h1v-3zM108 471v3h1v-3zM108 477v3h1v-3zM108 483v3h1v-3zM108 489v3h1v-3zM108 495v3h1v-3zM108 501v3h1v-3zM108 507v3h1v-3zM108 513v3h1v-3zM108 519v3h1v-3zM108 525v3h1v-3zM108 531v3h1v-3zM108 537v3h1v-3zM108 543v3h1v-3zM108 549v2h1v-2zM140 424v2h1v-2zM140 429v3h1v-3zM140 435v3h1v-3zM140 441v3h1v-3zM140 447v3h1v-3zM140 453v3h1v-3zM140 459v3h1v-3zM140 465v3h1v-3zM140 471v3h1v-3zM140 477v3h1v-3zM140 483v3h1v-3zM140 489v3h1v-3zM140 495v3h1v-3zM140 501v3h1v-3zM140 507v3h1v-3zM140 513v3h1v-3zM140 519v3h1v-3zM140 525v3h1v-3zM140 531v3h1v-3zM140 537v3h1v-3zM140 543v3h1v-3zM140 549v2h1v-2zM172 424v2h1v-2zM172 429v3h1v-3zM172 435v3h1v-3zM172 441v3h1v-3zM172 447v3h1v-3zM172 453v3h1v-3zM172 459v3h1v-3zM172 465v3h1v-3zM172 471v3h1v-3zM172 477v3h1v-3zM172 483v3h1v-3zM172 489v3h1v-3zM172 495v3h1v-3zM172 501v3h1v-3zM172 507v3h1v-3zM172 513v3h1v-3zM172 519v3h1v-3zM172 525v3h1v-3zM172 531v3h1v-3zM172 537v3h1v-3zM172 543v3h1v-3zM172 549v2h1v-2zM204 424v2h1v-2zM204 429v3h1v-3zM204 435v3h1v-3zM204 441v3h1v-3zM204 447v3h1v-3zM204 453v3h1v-3zM204 459v3h1v-3zM204 465v3h1v-3zM204 471v3h1v-3zM204 477v3h1v-3zM204 483v3h1v-3zM204 489v3h1v-3zM204 495v3h1v-3zM204 501v3h1v-3zM204 507v3h1v-3zM204 513v3h1v-3zM204 519v3h1v-3zM204 525v3h1v-3zM204 531v3h1v-3zM204 537v3h1v-3zM204 543v3h1v-3zM204 549v2h1v-2zM236 424v2h1v-2zM236 429v3h1v-3zM236 435v3h1v-3zM236 441v3h1v-3zM236 447v3h1v-3zM236 453v3h1v-3zM236 459v3h1v-3zM236 465v3h1v-3zM236 471v3h1v-3zM236 477v3h1v-3zM236 483v3h1v-3zM236 489v3h1v-3zM236 495v3h1v-3zM236 501v3h1v-3zM236 507v3h1v-3zM236 513v3h1v-3zM236 519v3h1v-3zM236 525v3h1v-3zM236 531v3h1v-3zM236 537v3h1v-3zM236 543v3h1v-3zM236 549v2h1v-2zM268 424v2h1v-2zM268 429v3h1v-3zM268 435v3h1v-3zM268 441v3h1v-3zM268 447v3h1v-3zM268 453v3h1v-3zM268 459v3h1v-3zM268 465v3h1v-3zM268 471v3h1v-3zM268 477v3h1v-3zM268 483v3h1v-3zM268 489v3h1v-3zM268 495v3h1v-3zM268 501v3h1v-3zM268 507v3h1v-3zM268 513v3h1v-3zM268 519v3h1v-3zM268 525v3h1v-3zM268 531v3h1v-3zM268 537v3h1v-3zM268 543v3h1v-3zM268 549v2h1v-2zM300 424v2h1v-2zM300 429v3h1v-3zM300 435v3h1v-3zM300 441v3h1v-3zM300 447v3h1v-3zM300 453v3h1v-3zM300 459v3h1v-3zM300 465v3h1v-3zM300 471v3h1v-3zM300 477v3h1v-3zM300 483v3h1v-3zM300 489v3h1v-3zM300 495v3h1v-3zM300 501v3h1v-3zM300 507v3h1v-3zM300 513v3h1v-3zM300 519v3h1v-3zM300 525v3h1v-3zM300 531v3h1v-3zM300 537v3h1v-3zM300 543v3h1v-3zM300 549v2h1v-2zM332 424v2h1v-2zM332 429v3h1v-3zM332 435v3h1v-3zM332 441v3h1v-3zM332 447v3h1v-3zM332 453v3h1v-3zM332 459v3h1v-3zM332 465v3h1v-3zM332 471v3h1v-3zM332 477v3h1v-3zM332 483v3h1v-3zM332 489v3h1v-3zM332 495v3h1v-3zM332 501v3h1v-3zM332 507v3h1v-3zM332 513v3h1v-3zM332 519v3h1v-3zM332 525v3h1v-3zM332 531v3h1v-3zM332 537v3h1v-3zM332 543v3h1v-3zM332 549v2h1v-2zM364 424v2h1v-2zM364 429v3h1v-3zM364 435v3h1v-3zM364 441v3h1v-3zM364 447v3h1v-3zM364 453v3h1v-3zM364 459v3h1v-3zM364 465v3h1v-3zM364 471v3h1v-3zM364 477v3h1v-3zM364 483v3h1v-3zM364 489v3h1v-3zM364 495v3h1v-3zM364 501v3h1v-3zM364 507v3h1v-3zM364 513v3h1v-3zM364 519v3h1v-3zM364 525v3h1v-3zM364 531v3h1v-3zM364 537v3h1v-3zM364 543v3h1v-3zM364 549v2h1v-2zM396 424v2h1v-2zM396 429v3h1v-3zM396 435v3h1v-3zM396 441v3h1v-3zM396 447v3h1v-3zM396 453v3h1v-3zM396 459v3h1v-3zM396 465v3h1v-3zM396 471v3h1v-3zM396 477v3h1v-3zM396 483v3h1v-3zM396 489v3h1v-3zM396 495v3h1v-3zM396 501v3h1v-3zM396 507v3h1v-3zM396 513v3h1v-3zM396 519v3h1v-3zM396 525v3h1v-3zM396 531v3h1v-3zM396 537v3h1v-3zM396 543v3h1v-3zM396 549v2h1v-2zM428 424v2h1v-2zM428 429v3h1v-3zM428 435v3h1v-3zM428 441v3h1v-3zM428 447v3h1v-3zM428 453v3h1v-3zM428 459v3h1v-3zM428 465v3h1v-3zM428 471v3h1v-3zM428 477v3h1v-3zM428 483v3h1v-3zM428 489v3h1v-3zM428 495v3h1v-3zM428 501v3h1v-3zM428 507v3h1v-3zM428 513v3h1v-3zM428 519v3h1v-3zM428 525v3h1v-3zM428 531v3h1v-3zM428 537v3h1v-3zM428 543v3h1v-3zM428 549v2h1v-2zM460 424v2h1v-2zM460 429v3h1v-3zM460 435v3h1v-3zM460 441v3h1v-3zM460 447v3h1v-3zM460 453v3h1v-3zM460 459v3h1v-3zM460 465v3h1v-3zM460 471v3h1v-3zM460 477v3h1v-3zM460 483v3h1v-3zM460 489v3h1v-3zM460 495v3h1v-3zM460 501v3h1v-3zM460 507v3h1v-3zM460 513v3h1v-3zM460 519v3h1v-3zM460 525v3h1v-3zM460 531v3h1v-3zM460 537v3h1v-3zM460 543v3h1v-3zM460 549v2h1v-2zM492 424v2h1v-2zM492 429v3h1v-3zM492 435v3h1v-3zM492 441v3h1v-3zM492 447v3h1v-3zM492 453v3h1v-3zM492 459v3h1v-3zM492 465v3h1v-3zM492 471v3h1v-3zM492 477v3h1v-3zM492 483v3h1v-3zM492 489v3h1v-3zM492 495v3h1v-3zM492 501v3h1v-3zM492 507v3h1v-3zM492 513v3h1v-3zM492 519v3h1v-3zM492 525v3h1v-3zM492 531v3h1v-3zM492 537v3h1v-3zM492 543v3h1v-3zM492 549v2h1v-2zM524 424v2h1v-2zM524 429v3h1v-3zM524 435v3h1v-3zM524 441v3h1v-3zM524 447v3h1v-3zM524 453v3h1v-3zM524 459v3h1v-3zM524 465v3h1v-3zM524 471v3h1v-3zM524 477v3h1v-3zM524 483v3h1v-3zM524 489v3h1v-3zM524 495v3h1v-3zM524 501v3h1v-3zM524 507v3h1v-3zM524 513v3h1v-3zM524 519v3h1v-3zM524 525v3h1v-3zM524 531v3h1v-3zM524 537v3h1v-3zM524 543v3h1v-3zM524 549v2h1v-2zM556 424v2h1v-2zM556 429v3h1v-3zM556 435v3h1v-3zM556 441v3h1v-3zM556 447v3h1v-3zM556 453v3h1v-3zM556 459v3h1v-3zM556 465v3h1v-3zM556 471v3h1v-3zM556 477v3h1v-3zM556 483v3h1v-3zM556 489v3h1v-3zM556 495v3h1v-3zM556 501v3h1v-3zM556 507v3h1v-3zM556 513v3h1v-3zM556 519v3h1v-3zM556 525v3h1v-3zM556 531v3h1v-3zM556 537v3h1v-3zM556 543v3h1v-3zM556 549v2h1v-2zM588 424v2h1v-2zM588 429v3h1v-3zM588 435v3h1v-3zM588 441v3h1v-3zM588 447v3h1v-3zM588 453v3h1v-3zM588 459v3h1v-3zM588 465v3h1v-3zM588 471v3h1v-3zM588 477v3h1v-3zM588 483v3h1v-3zM588 489v3h1v-3zM588 495v3h1v-3zM588 501v3h1v-3zM588 507v3h1v-3zM588 513v3h1v-3zM588 519v3h1v-3zM588 525v3h1v-3zM588 531v3h1v-3zM588 537v3h1v-3zM588 543v3h1v-3zM588 549v2h1v-2zM620 424v2h1v-2zM620 429v3h1v-3zM620 435v3h1v-3zM620 441v3h1v-3zM620 447v3h1v-3zM620 453v3h1v-3zM620 459v3h1v-3zM620 465v3h1v-3zM620 471v3h1v-3zM620 477v3h1v-3zM620 483v3h1v-3zM620 489v3h1v-3zM620 495v3h1v-3zM620 501v3h1v-3zM620 507v3h1v-3zM620 513v3h1v-3zM620 519v3h1v-3zM620 525v3h1v-3zM620 531v3h1v-3zM620 537v3h1v-3zM620 543v3h1v-3zM620 549v2h1v-2zM652 424v2h1v-2zM652 429v3h1v-3zM652 435v3h1v-3zM652 441v3h1v-3zM652 447v3h1v-3zM652 453v3h1v-3zM652 459v3h1v-3zM652 465v3h1v-3zM652 471v3h1v-3zM652 477v3h1v-3zM652 483v3h1v-3zM652 489v3h1v-3zM652 495v3h1v-3zM652 501v3h1v-3zM652 507v3h1v-3zM652 513v3h1v-3zM652 519v3h1v-3zM652 525v3h1v-3zM652 531v3h1v-3zM652 537v3h1v-3zM652 543v3h1v-3zM652 549v2h1v-2zM13 57h3v1h-3zM19 57h3v1h-3zM25 57h3v1h-3zM31 57h3v1h-3zM37 57h3v1h-3zM43 57h3v1h-3zM49 57h3v1h-3zM55 57h3v1h-3zM61 57h3v1h-3zM67 57h3v1h-3zM73 57h3v1h-3zM79 57h3v1h-3zM85 57h3v1h-3zM91 57h3v1h-3zM97 57h3v1h-3zM103 57h3v1h-3zM109 57h3v1h-3zM115 57h3v1h-3zM121 57h3v1h-3zM127 57h3v1h-3zM133 57h3v1h-3zM139 57h3v1h-3zM145 57h3v1h-3zM151 57h3v1h-3zM157 57h3v1h-3zM163 57h3v1h-3zM169 57h3v1h-3zM175 57h3v1h-3zM181 57h3v1h-3zM187 57h3v1h-3zM193 57h3v1h-3zM199 57h3v1h-3zM205 57h3v1h-3zM211 57h3v1h-3zM217 57h3v1h-3zM223 57h3v1h-3zM229 57h3v1h-3zM235 57h3v1h-3zM241 57h3v1h-3zM247 57h3v1h-3zM253 57h3v1h-3zM259 57h3v1h-3zM265 57h3v1h-3zM271 57h3v1h-3zM277 57h3v1h-3zM283 57h3v1h-3zM289 57h3v1h-3zM295 57h3v1h-3zM301 57h3v1h-3zM307 57h3v1h-3zM313 57h3v1h-3zM319 57h3v1h-3zM325 57h3v1h-3zM331 57h3v1h-3zM337 57h3v1h-3zM343 57h3v1h-3zM349 57h3v1h-3zM355 57h3v1h-3zM361 57h3v1h-3zM367 57h3v1h-3zM373 57h3v1h-3zM379 57h3v1h-3zM385 57h3v1h-3zM391 57h3v1h-3zM397 57h3v1h-3zM403 57h3v1h-3zM409 57h3v1h-3zM415 57h3v1h-3zM421 57h3v1h-3zM427 57h3v1h-3zM433 57h3v1h-3zM439 57h3v1h-3zM445 57h3v1h-3zM451 57h3v1h-3zM457 57h3v1h-3zM463 57h3v1h-3zM469 57h3v1h-3zM475 57h3v1h-3zM481 57h3v1h-3zM487 57h3v1h-3zM493 57h3v1h-3zM499 57h3v1h-3zM505 57h3v1h-3zM511 57h3v1h-3zM517 57h3v1h-3zM523 57h3v1h-3zM529 57h3v1h-3zM535 57h3v1h-3zM541 57h3v1h-3zM547 57h3v1h-3zM553 57h3v1h-3zM559 57h3v1h-3zM565 57h3v1h-3zM571 57h3v1h-3zM577 57h3v1h-3zM583 57h3v1h-3zM589 57h3v1h-3zM595 57h3v1h-3zM601 57h3v1h-3zM607 57h3v1h-3zM613 57h3v1h-3zM619 57h3v1h-3zM625 57h3v1h-3zM631 57h3v1h-3zM637 57h3v1h-3zM643 57h3v1h-3zM649 57h3v1h-3zM655 57h3v1h-3zM661 57h3v1h-3zM667 57h3v1h-3zM673 57h3v1h-3zM13 90h3v1h-3zM19 90h3v1h-3zM25 90h3v1h-3zM31 90h3v1h-3zM37 90h3v1h-3zM43 90h3v1h-3zM49 90h3v1h-3zM55 90h3v1h-3zM61 90h3v1h-3zM67 90h3v1h-3zM73 90h3v1h-3zM79 90h3v1h-3zM85 90h3v1h-3zM91 90h3v1h-3zM97 90h3v1h-3zM103 90h3v1h-3zM109 90h3v1h-3zM115 90h3v1h-3zM121 90h3v1h-3zM127 90h3v1h-3zM133 90h3v1h-3zM139 90h3v1h-3zM145 90h3v1h-3zM151 90h3v1h-3zM157 90h3v1h-3zM163 90h3v1h-3zM169 90h3v1h-3zM175 90h3v1h-3zM181 90h3v1h-3zM187 90h3v1h-3zM193 90h3v1h-3zM199 90h3v1h-3zM205 90h3v1h-3zM211 90h3v1h-3zM217 90h3v1h-3zM223 90h3v1h-3zM229 90h3v1h-3zM235 90h3v1h-3zM241 90h3v1h-3zM247 90h3v1h-3zM253 90h3v1h-3zM259 90h3v1h-3zM265 90h3v1h-3zM271 90h3v1h-3zM277 90h3v1h-3zM283 90h3v1h-3zM289 90h3v1h-3zM295 90h3v1h-3zM301 90h3v1h-3zM307 90h3v1h-3zM313 90h3v1h-3zM319 90h3v1h-3zM325 90h3v1h-3zM331 90h3v1h-3zM337 90h3v1h-3zM343 90h3v1h-3zM349 90h3v1h-3zM355 90h3v1h-3zM361 90h3v1h-3zM367 90h3v1h-3zM373 90h3v1h-3zM379 90h3v1h-3zM385 90h3v1h-3zM391 90h3v1h-3zM397 90h3v1h-3zM403 90h3v1h-3zM409 90h3v1h-3zM415 90h3v1h-3zM421 90h3v1h-3zM427 90h3v1h-3zM433 90h3v1h-3zM439 90h3v1h-3zM445 90h3v1h-3zM451 90h3v1h-3zM457 90h3v1h-3zM463 90h3v1h-3zM469 90h3v1h-3zM475 90h3v1h-3zM481 90h3v1h-3zM487 90h3v1h-3zM493 90h3v1h-3zM499 90h3v1h-3zM505 90h3v1h-3zM511 90h3v1h-3zM517 90h3v1h-3zM523 90h3v1h-3zM529 90h3v1h-3zM535 90h3v1h-3zM541 90h3v1h-3zM547 90h3v1h-3zM553 90h3v1h-3zM559 90h3v1h-3zM565 90h3v1h-3zM571 90h3v1h-3zM577 90h3v1h-3zM583 90h3v1h-3zM589 90h3v1h-3zM595 90h3v1h-3zM601 90h3v1h-3zM607 90h3v1h-3zM613 90h3v1h-3zM619 90h3v1h-3zM625 90h3v1h-3zM631 90h3v1h-3zM637 90h3v1h-3zM643 90h3v1h-3zM649 90h3v1h-3zM655 90h3v1h-3zM661 90h3v1h-3zM667 90h3v1h-3zM673 90h3v1h-3zM13 123h3v1h-3zM19 123h3v1h-3zM25 123h3v1h-3zM31 123h3v1h-3zM37 123h3v1h-3zM43 123h3v1h-3zM49 123h3v1h-3zM55 123h3v1h-3zM61 123h3v1h-3zM67 123h3v1h-3zM73 123h3v1h-3zM79 123h3v1h-3zM85 123h3v1h-3zM91 123h3v1h-3zM97 123h3v1h-3zM103 123h3v1h-3zM109 123h3v1h-3zM115 123h3v1h-3zM121 123h3v1h-3zM127 123h3v1h-3zM133 123h3v1h-3zM139 123h3v1h-3zM145 123h3v1h-3zM151 123h3v1h-3zM157 123h3v1h-3zM163 123h3v1h-3zM169 123h3v1h-3zM175 123h3v1h-3zM181 123h3v1h-3zM187 123h3v1h-3zM193 123h3v1h-3zM199 123h3v1h-3zM205 123h3v1h-3zM211 123h3v1h-3zM217 123h3v1h-3zM223 123h3v1h-3zM229 123h3v1h-3zM235 123h3v1h-3zM241 123h3v1h-3zM247 123h3v1h-3zM253 123h3v1h-3zM259 123h3v1h-3zM265 123h3v1h-3zM271 123h3v1h-3zM277 123h3v1h-3zM283 123h3v1h-3zM289 123h3v1h-3zM295 123h3v1h-3zM301 123h3v1h-3zM307 123h3v1h-3zM313 123h3v1h-3zM319 123h3v1h-3zM325 123h3v1h-3zM331 123h3v1h-3zM337 123h3v1h-3zM343 123h3v1h-3zM349 123h3v1h-3zM355 123h3v1h-3zM361 123h3v1h-3zM367 123h3v1h-3zM373 123h3v1h-3zM379 123h3v1h-3zM385 123h3v1h-3zM391 123h3v1h-3zM397 123h3v1h-3zM403 123h3v1h-3zM409 123h3v1h-3zM415 123h3v1h-3zM421 123h3v1h-3zM427 123h3v1h-3zM433 123h3v1h-3zM439 123h3v1h-3zM445 123h3v1h-3zM451 123h3v1h-3zM457 123h3v1h-3zM463 123h3v1h-3zM469 123h3v1h-3zM475 123h3v1h-3zM481 123h3v1h-3zM487 123h3v1h-3zM493 123h3v1h-3zM499 123h3v1h-3zM505 123h3v1h-3zM511 123h3v1h-3zM517 123h3v1h-3zM523 123h3v1h-3zM529 123h3v1h-3zM535 123h3v1h-3zM541 123h3v1h-3zM547 123h3v1h-3zM553 123h3v1h-3zM559 123h3v1h-3zM565 123h3v1h-3zM571 123h3v1h-3zM577 123h3v1h-3zM583 123h3v1h-3zM589 123h3v1h-3zM595 123h3v1h-3zM601 123h3v1h-3zM607 123h3v1h-3zM613 123h3v1h-3zM619 123h3v1h-3zM625 123h3v1h-3zM631 123h3v1h-3zM637 123h3v1h-3zM643 123h3v1h-3zM649 123h3v1h-3zM655 123h3v1h-3zM661 123h3v1h-3zM667 123h3v1h-3zM673 123h3v1h-3zM13 156h3v1h-3zM19 156h3v1h-3zM25 156h3v1h-3zM31 156h3v1h-3zM37 156h3v1h-3zM43 156h3v1h-3zM49 156h3v1h-3zM55 156h3v1h-3zM61 156h3v1h-3zM67 156h3v1h-3zM73 156h3v1h-3zM79 156h3v1h-3zM85 156h3v1h-3zM91 156h3v1h-3zM97 156h3v1h-3zM103 156h3v1h-3zM109 156h3v1h-3zM115 156h3v1h-3zM121 156h3v1h-3zM127 156h3v1h-3zM133 156h3v1h-3zM139 156h3v1h-3zM145 156h3v1h-3zM151 156h3v1h-3zM157 156h3v1h-3zM163 156h3v1h-3zM169 156h3v1h-3zM175 156h3v1h-3zM181 156h3v1h-3zM187 156h3v1h-3zM193 156h3v1h-3zM199 156h3v1h-3zM205 156h3v1h-3zM211 156h3v1h-3zM217 156h3v1h-3zM223 156h3v1h-3zM229 156h3v1h-3zM235 156h3v1h-3zM241 156h3v1h-3zM247 156h3v1h-3zM253 156h3v1h-3zM259 156h3v1h-3zM265 156h3v1h-3zM271 156h3v1h-3zM277 156h3v1h-3zM283 156h3v1h-3zM289 156h3v1h-3zM295 156h3v1h-3zM301 156h3v1h-3zM307 156h3v1h-3zM313 156h3v1h-3zM319 156h3v1h-3zM325 156h3v1h-3zM331 156h3v1h-3zM337 156h3v1h-3zM343 156h3v1h-3zM349 156h3v1h-3zM355 156h3v1h-3zM361 156h3v1h-3zM367 156h3v1h-3zM373 156h3v1h-3zM379 156h3v1h-3zM385 156h3v1h-3zM391 156h3v1h-3zM397 156h3v1h-3zM403 156h3v1h-3zM409 156h3v1h-3zM415 156h3v1h-3zM421 156h3v1h-3zM427 156h3v1h-3zM433 156h3v1h-3zM439 156h3v1h-3zM445 156h3v1h-3zM451 156h3v1h-3zM457 156h3v1h-3zM463 156h3v1h-3zM469 156h3v1h-3zM475 156h3v1h-3zM481 156h3v1h-3zM487 156h3v1h-3zM493 156h3v1h-3zM499 156h3v1h-3zM505 156h3v1h-3zM511 156h3v1h-3zM517 156h3v1h-3zM523 156h3v1h-3zM529 156h3v1h-3zM535 156h3v1h-3zM541 156h3v1h-3zM547 156h3v1h-3zM553 156h3v1h-3zM559 156h3v1h-3zM565 156h3v1h-3zM571 156h3v1h-3zM577 156h3v1h-3zM583 156h3v1h-3zM589 156h3v1h-3zM595 156h3v1h-3zM601 156h3v1h-3zM607 156h3v1h-3zM613 156h3v1h-3zM619 156h3v1h-3zM625 156h3v1h-3zM631 156h3v1h-3zM637 156h3v1h-3zM643 156h3v1h-3zM649 156h3v1h-3zM655 156h3v1h-3zM661 156h3v1h-3zM667 156h3v1h-3zM673 156h3v1h-3zM13 189h3v1h-3zM19 189h3v1h-3zM25 189h3v1h-3zM31 189h3v1h-3zM37 189h3v1h-3zM43 189h3v1h-3zM49 189h3v1h-3zM55 189h3v1h-3zM61 189h3v1h-3zM67 189h3v1h-3zM73 189h3v1h-3zM79 189h3v1h-3zM85 189h3v1h-3zM91 189h3v1h-3zM97 189h3v1h-3zM103 189h3v1h-3zM109 189h3v1h-3zM115 189h3v1h-3zM121 189h3v1h-3zM127 189h3v1h-3zM133 189h3v1h-3zM139 189h3v1h-3zM145 189h3v1h-3zM151 189h3v1h-3zM157 189h3v1h-3zM163 189h3v1h-3zM169 189h3v1h-3zM175 189h3v1h-3zM181 189h3v1h-3zM187 189h3v1h-3zM193 189h3v1h-3zM199 189h3v1h-3zM205 189h3v1h-3zM211 189h3v1h-3zM217 189h3v1h-3zM223 189h3v1h-3zM229 189h3v1h-3zM235 189h3v1h-3zM241 189h3v1h-3zM247 189h3v1h-3zM253 189h3v1h-3zM259 189h3v1h-3zM265 189h3v1h-3zM271 189h3v1h-3zM277 189h3v1h-3zM283 189h3v1h-3zM289 189h3v1h-3zM295 189h3v1h-3zM301 189h3v1h-3zM307 189h3v1h-3zM313 189h3v1h-3zM319 189h3v1h-3zM325 189h3v1h-3zM331 189h3v1h-3zM337 189h3v1h-3zM343 189h3v1h-3zM349 189h3v1h-3zM355 189h3v1h-3zM361 189h3v1h-3zM367 189h3v1h-3zM373 189h3v1h-3zM379 189h3v1h-3zM385 189h3v1h-3zM391 189h3v1h-3zM397 189h3v1h-3zM403 189h3v1h-3zM409 189h3v1h-3zM415 189h3v1h-3zM421 189h3v1h-3zM427 189h3v1h-3zM433 189h3v1h-3zM439 189h3v1h-3zM445 189h3v1h-3zM451 189h3v1h-3zM457 189h3v1h-3zM463 189h3v1h-3zM469 189h3v1h-3zM475 189h3v1h-3zM481 189h3v1h-3zM487 189h3v1h-3zM493 189h3v1h-3zM499 189h3v1h-3zM505 189h3v1h-3zM511 189h3v1h-3zM517 189h3v1h-3zM523 189h3v1h-3zM529 189h3v1h-3zM535 189h3v1h-3zM541 189h3v1h-3zM547 189h3v1h-3zM553 189h3v1h-3zM559 189h3v1h-3zM565 189h3v1h-3zM571 189h3v1h-3zM577 189h3v1h-3zM583 189h3v1h-3zM589 189h3v1h-3zM595 189h3v1h-3zM601 189h3v1h-3zM607 189h3v1h-3zM613 189h3v1h-3zM619 189h3v1h-3zM625 189h3v1h-3zM631 189h3v1h-3zM637 189h3v1h-3zM643 189h3v1h-3zM649 189h3v1h-3zM655 189h3v1h-3zM661 189h3v1h-3zM667 189h3v1h-3zM673 189h3v1h-3zM13 222h3v1h-3zM19 222h3v1h-3zM25 222h3v1h-3zM31 222h3v1h-3zM37 222h3v1h-3zM43 222h3v1h-3zM49 222h3v1h-3zM55 222h3v1h-3zM61 222h3v1h-3zM67 222h3v1h-3zM73 222h3v1h-3zM79 222h3v1h-3zM85 222h3v1h-3zM91 222h3v1h-3zM97 222h3v1h-3zM103 222h3v1h-3zM109 222h3v1h-3zM115 222h3v1h-3zM121 222h3v1h-3zM127 222h3v1h-3zM133 222h3v1h-3zM139 222h3v1h-3zM145 222h3v1h-3zM151 222h3v1h-3zM157 222h3v1h-3zM163 222h3v1h-3zM169 222h3v1h-3zM175 222h3v1h-3zM181 222h3v1h-3zM187 222h3v1h-3zM193 222h3v1h-3zM199 222h3v1h-3zM205 222h3v1h-3zM211 222h3v1h-3zM217 222h3v1h-3zM223 222h3v1h-3zM229 222h3v1h-3zM235 222h3v1h-3zM241 222h3v1h-3zM247 222h3v1h-3zM253 222h3v1h-3zM259 222h3v1h-3zM265 222h3v1h-3zM271 222h3v1h-3zM277 222h3v1h-3zM283 222h3v1h-3zM289 222h3v1h-3zM295 222h3v1h-3zM301 222h3v1h-3zM307 222h3v1h-3zM313 222h3v1h-3zM319 222h3v1h-3zM325 222h3v1h-3zM331 222h3v1h-3zM337 222h3v1h-3zM343 222h3v1h-3zM349 222h3v1h-3zM355 222h3v1h-3zM361 222h3v1h-3zM367 222h3v1h-3zM373 222h3v1h-3zM379 222h3v1h-3zM385 222h3v1h-3zM391 222h3v1h-3zM397 222h3v1h-3zM403 222h3v1h-3zM409 222h3v1h-3zM415 222h3v1h-3zM421 222h3v1h-3zM427 222h3v1h-3zM433 222h3v1h-3zM439 222h3v1h-3zM445 222h3v1h-3zM451 222h3v1h-3zM457 222h3v1h-3zM463 222h3v1h-3zM469 222h3v1h-3zM475 222h3v1h-3zM481 222h3v1h-3zM487 222h3v1h-3zM493 222h3v1h-3zM499 222h3v1h-3zM505 222h3v1h-3zM511 222h3v1h-3zM517 222h3v1h-3zM523 222h3v1h-3zM529 222h3v1h-3zM535 222h3v1h-3zM541 222h3v1h-3zM547 222h3v1h-3zM553 222h3v1h-3zM559 222h3v1h-3zM565 222h3v1h-3zM571 222h3v1h-3zM577 222h3v1h-3zM583 222h3v1h-3zM589 222h3v1h-3zM595 222h3v1h-3zM601 222h3v1h-3zM607 222h3v1h-3zM613 222h3v1h-3zM619 222h3v1h-3zM625 222h3v1h-3zM631 222h3v1h-3zM637 222h3v1h-3zM643 222h3v1h-3zM649 222h3v1h-3zM655 222h3v1h-3zM661 222h3v1h-3zM667 222h3v1h-3zM673 222h3v1h-3zM13 255h3v1h-3zM19 255h3v1h-3zM25 255h3v1h-3zM31 255h3v1h-3zM37 255h3v1h-3zM43 255h3v1h-3zM49 255h3v1h-3zM55 255h3v1h-3zM61 255h3v1h-3zM67 255h3v1h-3zM73 255h3v1h-3zM79 255h3v1h-3zM85 255h3v1h-3zM91 255h3v1h-3zM97 255h3v1h-3zM103 255h3v1h-3zM109 255h3v1h-3zM115 255h3v1h-3zM121 255h3v1h-3zM127 255h3v1h-3zM133 255h3v1h-3zM139 255h3v1h-3zM145 255h3v1h-3zM151 255h3v1h-3zM157 255h3v1h-3zM163 255h3v1h-3zM169 255h3v1h-3zM175 255h3v1h-3zM181 255h3v1h-3zM187 255h3v1h-3zM193 255h3v1h-3zM199 255h3v1h-3zM205 255h3v1h-3zM211 255h3v1h-3zM217 255h3v1h-3zM223 255h3v1h-3zM229 255h3v1h-3zM235 255h3v1h-3zM241 255h3v1h-3zM247 255h3v1h-3zM253 255h3v1h-3zM259 255h3v1h-3zM265 255h3v1h-3zM271 255h3v1h-3zM277 255h3v1h-3zM283 255h3v1h-3zM289 255h3v1h-3zM295 255h3v1h-3zM301 255h3v1h-3zM307 255h3v1h-3zM313 255h3v1h-3zM319 255h3v1h-3zM325 255h3v1h-3zM331 255h3v1h-3zM337 255h3v1h-3zM343 255h3v1h-3zM349 255h3v1h-3zM355 255h3v1h-3zM361 255h3v1h-3zM367 255h3v1h-3zM373 255h3v1h-3zM379 255h3v1h-3zM385 255h3v1h-3zM391 255h3v1h-3zM397 255h3v1h-3zM403 255h3v1h-3zM409 255h3v1h-3zM415 255h3v1h-3zM421 255h3v1h-3zM427 255h3v1h-3zM433 255h3v1h-3zM439 255h3v1h-3zM445 255h3v1h-3zM451 255h3v1h-3zM457 255h3v1h-3zM463 255h3v1h-3zM469 255h3v1h-3zM475 255h3v1h-3zM481 255h3v1h-3zM487 255h3v1h-3zM493 255h3v1h-3zM499 255h3v1h-3zM505 255h3v1h-3zM511 255h3v1h-3zM517 255h3v1h-3zM523 255h3v1h-3zM529 255h3v1h-3zM535 255h3v1h-3zM541 255h3v1h-3zM547 255h3v1h-3zM553 255h3v1h-3zM559 255h3v1h-3zM565 255h3v1h-3zM571 255h3v1h-3zM577 255h3v1h-3zM583 255h3v1h-3zM589 255h3v1h-3zM595 255h3v1h-3zM601 255h3v1h-3zM607 255h3v1h-3zM613 255h3v1h-3zM619 255h3v1h-3zM625 255h3v1h-3zM631 255h3v1h-3zM637 255h3v1h-3zM643 255h3v1h-3zM649 255h3v1h-3zM655 255h3v1h-3zM661 255h3v1h-3zM667 255h3v1h-3zM673 255h3v1h-3zM13 288h3v1h-3zM19 288h3v1h-3zM25 288h3v1h-3zM31 288h3v1h-3zM37 288h3v1h-3zM43 288h3v1h-3zM49 288h3v1h-3zM55 288h3v1h-3zM61 288h3v1h-3zM67 288h3v1h-3zM73 288h3v1h-3zM79 288h3v1h-3zM85 288h3v1h-3zM91 288h3v1h-3zM97 288h3v1h-3zM103 288h3v1h-3zM109 288h3v1h-3zM115 288h3v1h-3zM121 288h3v1h-3zM127 288h3v1h-3zM133 288h3v1h-3zM139 288h3v1h-3zM145 288h3v1h-3zM151 288h3v1h-3zM157 288h3v1h-3zM163 288h3v1h-3zM169 288h3v1h-3zM175 288h3v1h-3zM181 288h3v1h-3zM187 288h3v1h-3zM193 288h3v1h-3zM199 288h3v1h-3zM205 288h3v1h-3zM211 288h3v1h-3zM217 288h3v1h-3zM223 288h3v1h-3zM229 288h3v1h-3zM235 288h3v1h-3zM241 288h3v1h-3zM247 288h3v1h-3zM253 288h3v1h-3zM259 288h3v1h-3zM265 288h3v1h-3zM271 288h3v1h-3zM277 288h3v1h-3zM283 288h3v1h-3zM289 288h3v1h-3zM295 288h3v1h-3zM301 288h3v1h-3zM307 288h3v1h-3zM313 288h3v1h-3zM319 288h3v1h-3zM325 288h3v1h-3zM331 288h3v1h-3zM337 288h3v1h-3zM343 288h3v1h-3zM349 288h3v1h-3zM355 288h3v1h-3zM361 288h3v1h-3zM367 288h3v1h-3zM373 288h3v1h-3zM379 288h3v1h-3zM385 288h3v1h-3zM391 288h3v1h-3zM397 288h3v1h-3zM403 288h3v1h-3zM409 288h3v1h-3zM415 288h3v1h-3zM421 288h3v1h-3zM427 288h3v1h-3zM433 288h3v1h-3zM439 288h3v1h-3zM445 288h3v1h-3zM451 288h3v1h-3zM457 288h3v1h-3zM463 288h3v1h-3zM469 288h3v1h-3zM475 288h3v1h-3zM481 288h3v1h-3zM487 288h3v1h-3zM493 288h3v1h-3zM499 288h3v1h-3zM505 288h3v1h-3zM511 288h3v1h-3zM517 288h3v1h-3zM523 288h3v1h-3zM529 288h3v1h-3zM535 288h3v1h-3zM541 288h3v1h-3zM547 288h3v1h-3zM553 288h3v1h-3zM559 288h3v1h-3zM565 288h3v1h-3zM571 288h3v1h-3zM577 288h3v1h-3zM583 288h3v1h-3zM589 288h3v1h-3zM595 288h3v1h-3zM601 288h3v1h-3zM607 288h3v1h-3zM613 288h3v1h-3zM619 288h3v1h-3zM625 288h3v1h-3zM631 288h3v1h-3zM637 288h3v1h-3zM643 288h3v1h-3zM649 288h3v1h-3zM655 288h3v1h-3zM661 288h3v1h-3zM667 288h3v1h-3zM673 288h3v1h-3zM13 493h3v1h-3zM19 493h3v1h-3zM25 493h3v1h-3zM31 493h3v1h-3zM37 493h3v1h-3zM43 493h3v1h-3zM49 493h3v1h-3zM55 493h3v1h-3zM61 493h3v1h-3zM67 493h3v1h-3zM73 493h3v1h-3zM79 493h3v1h-3zM85 493h3v1h-3zM91 493h3v1h-3zM97 493h3v1h-3zM103 493h3v1h-3zM109 493h3v1h-3zM115 493h3v1h-3zM121 493h3v1h-3zM127 493h3v1h-3zM133 493h3v1h-3zM139 493h3v1h-3zM145 493h3v1h-3zM151 493h3v1h-3zM157 493h3v1h-3zM163 493h3v1h-3zM169 493h3v1h-3zM175 493h3v1h-3zM181 493h3v1h-3zM187 493h3v1h-3zM193 493h3v1h-3zM199 493h3v1h-3zM205 493h3v1h-3zM211 493h3v1h-3zM217 493h3v1h-3zM223 493h3v1h-3zM229 493h3v1h-3zM235 493h3v1h-3zM241 493h3v1h-3zM247 493h3v1h-3zM253 493h3v1h-3zM259 493h3v1h-3zM265 493h3v1h-3zM271 493h3v1h-3zM277 493h3v1h-3zM283 493h3v1h-3zM289 493h3v1h-3zM295 493h3v1h-3zM301 493h3v1h-3zM307 493h3v1h-3zM313 493h3v1h-3zM319 493h3v1h-3zM325 493h3v1h-3zM331 493h3v1h-3zM337 493h3v1h-3zM343 493h3v1h-3zM349 493h3v1h-3zM355 493h3v1h-3zM361 493h3v1h-3zM367 493h3v1h-3zM373 493h3v1h-3zM379 493h3v1h-3zM385 493h3v1h-3zM391 493h3v1h-3zM397 493h3v1h-3zM403 493h3v1h-3zM409 493h3v1h-3zM415 493h3v1h-3zM421 493h3v1h-3zM427 493h3v1h-3zM433 493h3v1h-3zM439 493h3v1h-3zM445 493h3v1h-3zM451 493h3v1h-3zM457 493h3v1h-3zM463 493h3v1h-3zM469 493h3v1h-3zM475 493h3v1h-3zM481 493h3v1h-3zM487 493h3v1h-3zM493 493h3v1h-3zM499 493h3v1h-3zM505 493h3v1h-3zM511 493h3v1h-3zM517 493h3v1h-3zM523 493h3v1h-3zM529 493h3v1h-3zM535 493h3v1h-3zM541 493h3v1h-3zM547 493h3v1h-3zM553 493h3v1h-3zM559 493h3v1h-3zM565 493h3v1h-3zM571 493h3v1h-3zM577 493h3v1h-3zM583 493h3v1h-3zM589 493h3v1h-3zM595 493h3v1h-3zM601 493h3v1h-3zM607 493h3v1h-3zM613 493h3v1h-3zM619 493h3v1h-3zM625 493h3v1h-3zM631 493h3v1h-3zM637 493h3v1h-3zM643 493h3v1h-3zM649 493h3v1h-3zM655 493h3v1h-3zM661 493h3v1h-3zM667 493h3v1h-3zM673 493h3v1h-3z" fill="#778899"/><path d="M13 372h3v1h-3zM19 372h3v1h-3zM25 372h3v1h-3zM31 372h3v1h-3zM37 372h3v1h-3zM43 372h3v1h-3zM49 372h3v1h-3zM55 372h3v1h-3zM61 372h3v1h-3zM67 372h3v1h-3zM73 372h3v1h-3zM79 372h3v1h-3zM85 372h3v1h-3zM91 372h3v1h-3zM97 372h3v1h-3zM103 372h3v1h-3zM109 372h3v1h-3zM115 372h3v1h-3zM121 372h3v1h-3zM127 372h3v1h-3zM133 372h3v1h-3zM139 372h3v1h-3zM145 372h3v1h-3zM151 372h3v1h-3zM157 372h3v1h-3zM163 372h3v1h-3zM169 372h3v1h-3zM175 372h3v1h-3zM181 372h3v1h-3zM187 372h3v1h-3zM193 372h3v1h-3zM199 372h3v1h-3zM205 372h3v1h-3zM211 372h3v1h-3zM217 372h3v1h-3zM223 372h3v1h-3zM229 372h3v1h-3zM235 372h3v1h-3zM241 372h3v1h-3zM247 372h3v1h-3zM253 372h3v1h-3zM259 372h3v1h-3zM265 372h3v1h-3zM271 372h3v1h-3zM277 372h3v1h-3zM283 372h3v1h-3zM289 372h3v1h-3zM295 372h3v1h-3zM301 372h3v1h-3zM307 372h3v1h-3zM313 372h3v1h-3zM319 372h3v1h-3zM325 372h3v1h-3zM331 372h3v1h-3zM337 372h3v1h-3zM343 372h3v1h-3zM349 372h3v1h-3zM355 372h3v1h-3zM361 372h3v1h-3zM367 372h3v1h-3zM373 372h3v1h-3zM379 372h3v1h-3zM385 372h3v1h-3zM391 372h3v1h-3zM397 372h3v1h-3zM403 372h3v1h-3zM409 372h3v1h-3zM415 372h3v1h-3zM421 372h3v1h-3zM427 372h3v1h-3zM433 372h3v1h-3zM439 372h3v1h-3zM445 372h3v1h-3zM451 372h3v1h-3zM457 372h3v1h-3zM463 372h3v1h-3zM469 372h3v1h-3zM475 372h3v1h-3zM481 372h3v1h-3zM487 372h3v1h-3zM493 372h3v1h-3zM499 372h3v1h-3zM505 372h3v1h-3zM511 372h3v1h-3zM517 372h3v1h-3zM523 372h3v1h-3zM529 372h3v1h-3zM535 372h3v1h-3zM541 372h3v1h-3zM547 372h3v1h-3zM553 372h3v1h-3zM559 372h3v1h-3zM565 372h3v1h-3zM571 372h3v1h-3zM577 372h3v1h-3zM583 372h3v1h-3zM589 372h3v1h-3zM595 372h3v1h-3zM601 372h3v1h-3zM607 372h3v1h-3zM613 372h3v1h-3zM619 372h3v1h-3zM625 372h3v1h-3zM631 372h3v1h-3zM637 372h3v1h-3zM643 372h3v1h-3zM649 372h3v1h-3zM655 372h3v1h-3zM661 372h3v1h-3zM667 372h3v1h-3zM673 372h3v1h-3zM13 436h3v1h-3zM19 436h3v1h-3zM25 436h3v1h-3zM31 436h3v1h-3zM37 436h3v1h-3zM43 436h3v1h-3zM49 436h3v1h-3zM55 436h3v1h-3zM61 436h3v1h-3zM67 436h3v1h-3zM73 436h3v1h-3zM79 436h3v1h-3zM85 436h3v1h-3zM91 436h3v1h-3zM97 436h3v1h-3zM103 436h3v1h-3zM109 436h3v1h-3zM115 436h3v1h-3zM121 436h3v1h-3zM127 436h3v1h-3zM133 436h3v1h-3zM139 436h3v1h-3zM145 436h3v1h-3zM151 436h3v1h-3zM157 436h3v1h-3zM163 436h3v1h-3zM169 436h3v1h-3zM175 436h3v1h-3zM181 436h3v1h-3zM187 436h3v1h-3zM193 436h3v1h-3zM199 436h3v1h-3zM205 436h3v1h-3zM211 436h3v1h-3zM217 436h3v1h-3zM223 436h3v1h-3zM229 436h3v1h-3zM235 436h3v1h-3zM241 436h3v1h-3zM247 436h3v1h-3zM253 436h3v1h-3zM259 436h3v1h-3zM265 436h3v1h-3zM271 436h3v1h-3zM277 436h3v1h-3zM283 436h3v1h-3zM289 436h3v1h-3zM295 436h3v1h-3zM301 436h3v1h-3zM307 436h3v1h-3zM313 436h3v1h-3zM319 436h3v1h-3zM325 436h3v1h-3zM331 436h3v1h-3zM337 436h3v1h-3zM343 436h3v1h-3zM349 436h3v1h-3zM355 436h3v1h-3zM361 436h3v1h-3zM367 436h3v1h-3zM373 436h3v1h-3zM379 436h3v1h-3zM385 436h3v1h-3zM391 436h3v1h-3zM397 436h3v1h-3zM403 436h3v1h-3zM409 436h3v1h-3zM415 436h3v1h-3zM421 436h3v1h-3zM427 436h3v1h-3zM433 436h3v1h-3zM439 436h3v1h-3zM445 436h3v1h-3zM451 436h3v1h-3zM457 436h3v1h-3zM463 436h3v1h-3zM469 436h3v1h-3zM475 436h3v1h-3zM481 436h3v1h-3zM487 436h3v1h-3zM493 436h3v1h-3zM499 436h3v1h-3zM505 436h3v1h-3zM511 436h3v1h-3zM517 436h3v1h-3zM523 436h3v1h-3zM529 436h3v1h-3zM535 436h3v1h-3zM541 436h3v1h-3zM547 436h3v1h-3zM553 436h3v1h-3zM559 436h3v1h-3zM565 436h3v1h-3zM571 436h3v1h-3zM577 436h3v1h-3zM583 436h3v1h-3zM589 436h3v1h-3zM595 436h3v1h-3zM601 436h3v1h-3zM607 436h3v1h-3zM613 436h3v1h-3zM619 436h3v1h-3zM625 436h3v1h-3zM631 436h3v1h-3zM637 436h3v1h-3zM643 436h3v1h-3zM649 436h3v1h-3zM655 436h3v1h-3zM661 436h3v1h-3zM667 436h3v1h-3zM673 436h3v1h-3zM13 447h3v1h-3zM19 447h3v1h-3zM25 447h3v1h-3zM31 447h3v1h-3zM37 447h3v1h-3zM43 447h3v1h-3zM49 447h3v1h-3zM55 447h3v1h-3zM61 447h3v1h-3zM67 447h3v1h-3zM73 447h3v1h-3zM79 447h3v1h-3zM85 447h3v1h-3zM91 447h3v1h-3zM97 447h3v1h-3zM103 447h3v1h-3zM109 447h3v1h-3zM115 447h3v1h-3zM121 447h3v1h-3zM127 447h3v1h-3zM133 447h3v1h-3zM139 447h3v1h-3zM145 447h3v1h-3zM151 447h3v1h-3zM157 447h3v1h-3zM163 447h3v1h-3zM169 447h3v1h-3zM175 447h3v1h-3zM181 447h3v1h-3zM187 447h3v1h-3zM193 447h3v1h-3zM199 447h3v1h-3zM205 447h3v1h-3zM211 447h3v1h-3zM217 447h3v1h-3zM223 447h3v1h-3zM229 447h3v1h-3zM235 447h3v1h-3zM241 447h3v1h-3zM247 447h3v1h-3zM253 447h3v1h-3zM259 447h3v1h-3zM265 447h3v1h-3zM271 447h3v1h-3zM277 447h3v1h-3zM283 447h3v1h-3zM289 447h3v1h-3zM295 447h3v1h-3zM301 447h3v1h-3zM307 447h3v1h-3zM313 447h3v1h-3zM319 447h3v1h-3zM325 447h3v1h-3zM331 447h3v1h-3zM337 447h3v1h-3zM343 447h3v1h-3zM349 447h3v1h-3zM355 447h3v1h-3zM361 447h3v1h-3zM367 447h3v1h-3zM373 447h3v1h-3zM379 447h3v1h-3zM385 447h3v1h-3zM391 447h3v1h-3zM397 447h3v1h-3zM403 447h3v1h-3zM409 447h3v1h-3zM415 447h3v1h-3zM421 447h3v1h-3zM427 447h3v1h-3zM433 447h3v1h-3zM439 447h3v1h-3zM445 447h3v1h-3zM451 447h3v1h-3zM457 447h3v1h-3zM463 447h3v1h-3zM469 447h3v1h-3zM475 447h3v1h-3zM481 447h3v1h-3zM487 447h3v1h-3zM493 447h3v1h-3zM499 447h3v1h-3zM505 447h3v1h-3zM511 447h3v1h-3zM517 447h3v1h-3zM523 447h3v1h-3zM529 447h3v1h-3zM535 447h3v1h-3zM541 447h3v1h-3zM547 447h3v1h-3zM553 447h3v1h-3zM559 447h3v1h-3zM565 447h3v1h-3zM571 447h3v1h-3zM577 447h3v1h-3zM583 447h3v1h-3zM589 447h3v1h-3zM595 447h3v1h-3zM601 447h3v1h-3zM607 447h3v1h-3zM613 447h3v1h-3zM619 447h3v1h-3zM625 447h3v1h-3zM631 447h3v1h-3zM637 447h3v1h-3zM643 447h3v1h-3zM649 447h3v1h-3zM655 447h3v1h-3zM661 447h3v1h-3zM667 447h3v1h-3zM673 447h3v1h-3zM13 465h3v1h-3zM19 465h3v1h-3zM25 465h3v1h-3zM31 465h3v1h-3zM37 465h3v1h-3zM43 465h3v1h-3zM49 465h3v1h-3zM55 465h3v1h-3zM61 465h3v1h-3zM67 465h3v1h-3zM73 465h3v1h-3zM79 465h3v1h-3zM85 465h3v1h-3zM91 465h3v1h-3zM97 465h3v1h-3zM103 465h3v1h-3zM109 465h3v1h-3zM115 465h3v1h-3zM121 465h3v1h-3zM127 465h3v1h-3zM133 465h3v1h-3zM139 465h3v1h-3zM145 465h3v1h-3zM151 465h3v1h-3zM157 465h3v1h-3zM163 465h3v1h-3zM169 465h3v1h-3zM175 465h3v1h-3zM181 465h3v1h-3zM187 465h3v1h-3zM193 465h3v1h-3zM199 465h3v1h-3zM205 465h3v1h-3zM211 465h3v1h-3zM217 465h3v1h-3zM223 465h3v1h-3zM229 465h3v1h-3zM235 465h3v1h-3zM241 465h3v1h-3zM247 465h3v1h-3zM253 465h3v1h-3zM259 465h3v1h-3zM265 465h3v1h-3zM271 465h3v1h-3zM277 465h3v1h-3zM283 465h3v1h-3zM289 465h3v1h-3zM295 465h3v1h-3zM301 465h3v1h-3zM307 465h3v1h-3zM313 465h3v1h-3zM319 465h3v1h-3zM325 465h3v1h-3zM331 465h3v1h-3zM337 465h3v1h-3zM343 465h3v1h-3zM349 465h3v1h-3zM355 465h3v1h-3zM361 465h3v1h-3zM367 465h3v1h-3zM373 465h3v1h-3zM379 465h3v1h-3zM385 465h3v1h-3zM391 465h3v1h-3zM397 465h3v1h-3zM403 465h3v1h-3zM409 465h3v1h-3zM415 465h3v1h-3zM421 465h3v1h-3zM427 465h3v1h-3zM433 465h3v1h-3zM439 465h3v1h-3zM445 465h3v1h-3zM451 465h3v1h-3zM457 465h3v1h-3zM463 465h3v1h-3zM469 465h3v1h-3zM475 465h3v1h-3zM481 465h3v1h-3zM487 465h3v1h-3zM493 465h3v1h-3zM499 465h3v1h-3zM505 465h3v1h-3zM511 465h3v1h-3zM517 465h3v1h-3zM523 465h3v1h-3zM529 465h3v1h-3zM535 465h3v1h-3zM541 465h3v1h-3zM547 465h3v1h-3zM553 465h3v1h-3zM559 465h3v1h-3zM565 465h3v1h-3zM571 465h3v1h-3zM577 465h3v1h-3zM583 465h3v1h-3zM589 465h3v1h-3zM595 465h3v1h-3zM601 465h3v1h-3zM607 465h3v1h-3zM613 465h3v1h-3zM619 465h3v1h-3zM625 465h3v1h-3zM631 465h3v1h-3zM637 465h3v1h-3zM643 465h3v1h-3zM649 465h3v1h-3zM655 465h3v1h-3zM661 465h3v1h-3zM667 465h3v1h-3zM673 465h3v1h-3zM13 522h3v1h-3zM19 522h3v1h-3zM25 522h3v1h-3zM31 522h3v1h-3zM37 522h3v1h-3zM43 522h3v1h-3zM49 522h3v1h-3zM55 522h3v1h-3zM61 522h3v1h-3zM67 522h3v1h-3zM73 522h3v1h-3zM79 522h3v1h-3zM85 522h3v1h-3zM91 522h3v1h-3zM97 522h3v1h-3zM103 522h3v1h-3zM109 522h3v1h-3zM115 522h3v1h-3zM121 522h3v1h-3zM127 522h3v1h-3zM133 522h3v1h-3zM139 522h3v1h-3zM145 522h3v1h-3zM151 522h3v1h-3zM157 522h3v1h-3zM163 522h3v1h-3zM169 522h3v1h-3zM175 522h3v1h-3zM181 522h3v1h-3zM187 522h3v1h-3zM193 522h3v1h-3zM199 522h3v1h-3zM205 522h3v1h-3zM211 522h3v1h-3zM217 522h3v1h-3zM223 522h3v1h-3zM229 522h3v1h-3zM235 522h3v1h-3zM241 522h3v1h-3zM247 522h3v1h-3zM253 522h3v1h-3zM259 522h3v1h-3zM265 522h3v1h-3zM271 522h3v1h-3zM277 522h3v1h-3zM283 522h3v1h-3zM289 522h3v1h-3zM295 522h3v1h-3zM301 522h3v1h-3zM307 522h3v1h-3zM313 522h3v1h-3zM319 522h3v1h-3zM325 522h3v1h-3zM331 522h3v1h-3zM337 522h3v1h-3zM343 522h3v1h-3zM349 522h3v1h-3zM355 522h3v1h-3zM361 522h3v1h-3zM367 522h3v1h-3zM373 522h3v1h-3zM379 522h3v1h-3zM385 522h3v1h-3zM391 522h3v1h-3zM397 522h3v1h-3zM403 522h3v1h-3zM409 522h3v1h-3zM415 522h3v1h-3zM421 522h3v1h-3zM427 522h3v1h-3zM433 522h3v1h-3zM439 522h3v1h-3zM445 522h3v1h-3zM451 522h3v1h-3zM457 522h3v1h-3zM463 522h3v1h-3zM469 522h3v1h-3zM475 522h3v1h-3zM481 522h3v1h-3zM487 522h3v1h-3zM493 522h3v1h-3zM499 522h3v1h-3zM505 522h3v1h-3zM511 522h3v1h-3zM517 522h3v1h-3zM523 522h3v1h-3zM529 522h3v1h-3zM535 522h3v1h-3zM541 522h3v1h-3zM547 522h3v1h-3zM553 522h3v1h-3zM559 522h3v1h-3zM565 522h3v1h-3zM571 522h3v1h-3zM577 522h3v1h-3zM583 522h3v1h-3zM589 522h3v1h-3zM595 522h3v1h-3zM601 522h3v1h-3zM607 522h3v1h-3zM613 522h3v1h-3zM619 522h3v1h-3zM625 522h3v1h-3zM631 522h3v1h-3zM637 522h3v1h-3zM643 522h3v1h-3zM649 522h3v1h-3zM655 522h3v1h-3zM661 522h3v1h-3zM667 522h3v1h-3zM673 522h3v1h-3zM13 539h3v1h-3zM19 539h3v1h-3zM25 539h3v1h-3zM31 539h3v1h-3zM37 539h3v1h-3zM43 539h3v1h-3zM49 539h3v1h-3zM55 539h3v1h-3zM61 539h3v1h-3zM67 539h3v1h-3zM73 539h3v1h-3zM79 539h3v1h-3zM85 539h3v1h-3zM91 539h3v1h-3zM97 539h3v1h-3zM103 539h3v1h-3zM109 539h3v1h-3zM115 539h3v1h-3zM121 539h3v1h-3zM127 539h3v1h-3zM133 539h3v1h-3zM139 539h3v1h-3zM145 539h3v1h-3zM151 539h3v1h-3zM157 539h3v1h-3zM163 539h3v1h-3zM169 539h3v1h-3zM175 539h3v1h-3zM181 539h3v1h-3zM187 539h3v1h-3zM193 539h3v1h-3zM199 539h3v1h-3zM205 539h3v1h-3zM211 539h3v1h-3zM217 539h3v1h-3zM223 539h3v1h-3zM229 539h3v1h-3zM235 539h3v1h-3zM241 539h3v1h-3zM247 539h3v1h-3zM253 539h3v1h-3zM259 539h3v1h-3zM265 539h3v1h-3zM271 539h3v1h-3zM277 539h3v1h-3zM283 539h3v1h-3zM289 539h3v1h-3zM295 539h3v1h-3zM301 539h3v1h-3zM307 539h3v1h-3zM313 539h3v1h-3zM319 539h3v1h-3zM325 539h3v1h-3zM331 539h3v1h-3zM337 539h3v1h-3zM343 539h3v1h-3zM349 539h3v1h-3zM355 539h3v1h-3zM361 539h3v1h-3zM367 539h3v1h-3zM373 539h3v1h-3zM379 539h3v1h-3zM385 539h3v1h-3zM391 539h3v1h-3zM397 539h3v1h-3zM403 539h3v1h-3zM409 539h3v1h-3zM415 539h3v1h-3zM421 539h3v1h-3zM427 539h3v1h-3zM433 539h3v1h-3zM439 539h3v1h-3zM445 539h3v1h-3zM451 539h3v1h-3zM457 539h3v1h-3zM463 539h3v1h-3zM469 539h3v1h-3zM475 539h3v1h-3zM481 539h3v1h-3zM487 539h3v1h-3zM493 539h3v1h-3zM499 539h3v1h-3zM505 539h3v1h-3zM511 539h3v1h-3zM517 539h3v1h-3zM523 539h3v1h-3zM529 539h3v1h-3zM535 539h3v1h-3zM541 539h3v1h-3zM547 539h3v1h-3zM553 539h3v1h-3zM559 539h3v1h-3zM565 539h3v1h-3zM571 539h3v1h-3zM577 539h3v1h-3zM583 539h3v1h-3zM589 539h3v1h-3zM595 539h3v1h-3zM601 539h3v1h-3zM607 539h3v1h-3zM613 539h3v1h-3zM619 539h3v1h-3zM625 539h3v1h-3zM631 539h3v1h-3zM637 539h3v1h-3zM643 539h3v1h-3zM649 539h3v1h-3zM655 539h3v1h-3zM661 539h3v1h-3zM667 539h3v1h-3zM673 539h3v1h-3z" fill="#c0c0c0"/><g clip-path="url(#cm)"><path d="M12 221h1v10h-1zM10 223h5v7h-5zM20 221h1v18h-1zM18 223h5v9h-5zM28 231h1v31h-1zM26 232h5v29h-5zM36 255h1v19h-1zM34 260h5v11h-5zM44 263h1v13h-1zM42 269h5v2h-5zM52 262h1v15h-1zM50 266h5v4h-5zM60 260h1v23h-1zM58 265h5v16h-5zM68 271h1v14h-1zM66 274h5v7h-5zM76 251h1v25h-1zM74 253h5v22h-5zM84 247h1v13h-1zM82 251h5v3h-5zM92 250h1v11h-1zM90 251h5v4h-5zM100 251h1v26h-1zM98 255h5v19h-5zM108 269h1v6h-1zM106 272h5v1h-5zM116 264h1v11h-1zM114 266h5v5h-5zM124 251h1v28h-1zM122 254h5v12h-5zM132 244h1v14h-1zM130 245h5v10h-5zM140 231h1v21h-1zM138 241h5v5h-5zM148 236h1v12h-1zM146 239h5v3h-5zM156 234h1v13h-1zM154 241h5v2h-5zM164 240h1v22h-1zM162 243h5v16h-5zM172 250h1v14h-1zM170 252h5v7h-5zM180 246h1v12h-1zM178 252h5v1h-5zM188 253h1v10h-1zM186 254h5v2h-5zM196 226h1v30h-1zM194 229h5v26h-5zM204 229h1v19h-1zM202 229h5v12h-5zM212 228h1v15h-1zM210 240h5v1h-5zM220 224h1v22h-1zM218 238h5v3h-5zM228 231h1v13h-1zM226 234h5v4h-5zM236 226h1v12h-1zM234 230h5v5h-5zM244 227h1v10h-1zM242 229h5v2h-5zM252 211h1v22h-1zM250 213h5v17h-5zM260 212h1v10h-1zM258 213h5v4h-5zM268 218h1v24h-1zM266 219h5v19h-5zM276 229h1v13h-1zM274 233h5v5h-5zM284 230h1v14h-1zM282 233h5v5h-5zM292 231h1v9h-1zM290 236h5v2h-5zM300 212h1v26h-1zM298 216h5v21h-5zM308 214h1v10h-1zM306 215h5v7h-5zM316 219h1v19h-1zM314 221h5v10h-5zM324 225h1v23h-1zM322 228h5v3h-5zM332 215h1v18h-1zM330 221h5v8h-5zM340 200h1v23h-1zM338 207h5v15h-5zM348 196h1v13h-1zM346 204h5v3h-5zM356 197h1v14h-1zM354 200h5v4h-5zM364 181h1v23h-1zM362 190h5v9h-5zM372 177h1v15h-1zM370 184h5v6h-5zM380 172h1v16h-1zM378 173h5v12h-5zM388 149h1v20h-1zM386 154h5v14h-5zM396 147h1v20h-1zM394 154h5v9h-5zM404 152h1v20h-1zM402 162h5v9h-5zM412 159h1v23h-1zM410 163h5v8h-5zM420 155h1v15h-1zM418 155h5v8h-5zM428 147h1v22h-1zM426 151h5v11h-5zM436 161h1v16h-1zM434 161h5v3h-5zM444 149h1v29h-1zM442 150h5v14h-5zM452 138h1v19h-1zM450 143h5v8h-5zM460 125h1v36h-1zM458 128h5v16h-5zM468 124h1v14h-1zM466 128h5v9h-5zM476 131h1v11h-1zM474 136h5v3h-5zM484 121h1v26h-1zM482 138h5v3h-5zM492 135h1v11h-1zM490 137h5v4h-5zM500 124h1v19h-1zM498 126h5v12h-5zM508 122h1v15h-1zM506 127h5v5h-5zM516 122h1v14h-1zM514 129h5v2h-5zM524 114h1v17h-1zM522 116h5v14h-5zM532 110h1v23h-1zM530 115h5v17h-5zM540 111h1v22h-1zM538 118h5v15h-5zM548 113h1v9h-1zM546 116h5v1h-5zM556 105h1v22h-1zM554 108h5v8h-5zM564 91h1v19h-1zM562 92h5v17h-5zM572 76h1v21h-1zM570 78h5v15h-5zM580 69h1v25h-1zM578 75h5v4h-5zM588 73h1v15h-1zM586 77h5v3h-5zM596 68h1v18h-1zM594 77h5v3h-5zM604 64h1v15h-1zM602 69h5v8h-5zM612 60h1v25h-1zM610 68h5v12h-5zM620 48h1v35h-1zM618 50h5v30h-5zM628 49h1v12h-1zM626 52h5v6h-5zM636 47h1v14h-1zM634 54h5v5h-5zM644 52h1v41h-1zM642 54h5v11h-5zM652 63h1v21h-1zM650 65h5v7h-5zM660 71h1v30h-1zM658 73h5v14h-5zM668 69h1v23h-1zM666 72h5v20h-5zM676 68h1v13h-1zM674 73h5v4h-5z" fill="#00ff00"/><path d="M11 224h3v5h-3zM51 267h3v2h-3zM67 275h3v5h-3zM75 254h3v20h-3zM83 252h3v1h-3zM115 267h3v3h-3zM123 255h3v10h-3zM131 246h3v8h-3zM139 242h3v3h-3zM171 253h3v5h-3zM195 230h3v24h-3zM219 239h3v1h-3zM227 235h3v2h-3zM235 231h3v3h-3zM251 214h3v15h-3zM275 234h3v3h-3zM299 217h3v19h-3zM323 229h3v1h-3zM331 222h3v6h-3zM339 208h3v13h-3zM347 205h3v1h-3zM355 201h3v2h-3zM363 191h3v7h-3zM371 185h3v4h-3zM379 174h3v10h-3zM387 155h3v12h-3zM411 164h3v6h-3zM419 156h3v6h-3zM443 151h3v12h-3zM451 144h3v6h-3zM459 129h3v14h-3zM491 138h3v2h-3zM499 127h3v10h-3zM523 117h3v12h-3zM539 119h3v13h-3zM555 109h3v6h-3zM563 93h3v15h-3zM571 79h3v13h-3zM579 76h3v2h-3zM595 78h3v1h-3zM603 70h3v6h-3zM619 51h3v28h-3zM635 55h3v3h-3zM667 73h3v18h-3z" fill="#000"/><path d="M19 224h3v7h-3zM27 233h3v27h-3zM35 261h3v9h-3zM59 266h3v14h-3zM91 252h3v2h-3zM99 256h3v17h-3zM147 240h3v1h-3zM163 244h3v14h-3zM203 230h3v10h-3zM259 214h3v2h-3zM267 220h3v17h-3zM283 234h3v3h-3zM307 216h3v5h-3zM315 222h3v8h-3zM395 155h3v7h-3zM403 163h3v7h-3zM427 152h3v9h-3zM435 162h3v1h-3zM467 129h3v7h-3zM475 137h3v1h-3zM483 139h3v1h-3zM507 128h3v3h-3zM531 116h3v15h-3zM587 78h3v1h-3zM611 69h3v10h-3zM627 53h3v4h-3zM643 55h3v9h-3zM651 66h3v5h-3zM659 74h3v12h-3zM675 74h3v2h-3z" fill="#fff"/><polygon points="195.50,257.20 197.35,261.30 201.82,260.85 199.20,264.50 201.82,268.15 197.35,267.70 195.50,271.80 193.65,267.70 189.18,268.15 191.80,264.50 189.18,260.85 193.65,261.30" fill="#ee82ee" shape-rendering="geometricPrecision"/><path d="M204.2 268.5 L213.7 278 L213.7 281.4 L206.1 273.8 L206.1 290.5 L202.3 290.5 L202.3 273.8 L194.7 281.4 L194.7 278 Z" fill="#ee82ee" shape-rendering="geometricPrecision"/></g><g clip-path="url(#cmo)"><polyline points="12,320.4 20,328.9 28,358.2 36,367.7 44,367.7 52,397.9 60,408.7 68,398.5 76,379 84,380 92,401.7 100,414.3 108,413.6 116,405.5 124,400.4 132,388.5 140,354.4 148,345.9 156,348.4 164,364.8 172,346.3 180,351.6 188,372.4 196,353.1 204,358.2 212,340.6 220,341.2 228,343.1 236,349.7 244,358.2 252,347.8 260,348.8 268,365.2 276,348.8 284,357.6 292,357.6 300,338.4 308,363.9 316,363.9 324,361.4 332,357 340,347.9 348,347.9 356,346 364,350.2 372,343.8 380,313.9 388,301 396,303.5 404,313 412,323.7 420,312.4 428,311.1 436,313.5 444,309.2 452,313.9 460,304.5 468,315.8 476,327.1 484,332.8 492,339.4 500,347.6 508,344.5 516,337.5 524,330.9 532,350.8 540,334.3 548,330.5 556,334.7 564,329 572,329 580,320 588,320 596,316.7 604,313 612,330.9 620,303 628,310 636,318.6 644,315.8 652,332.8 660,345.7 668,341.9 676,357.8" fill="none" stroke="#1e90ff" stroke-width="2" stroke-linejoin="miter" shape-rendering="crispEdges"/></g><g clip-path="url(#cr)"><polyline points="12,490.1 20,484.4 28,478.8 36,472.5 44,470.6 52,468.7 60,473.6 68,477.8 76,478.2 84,480.6 92,483.1 100,489.5 108,497.7 116,506.2 124,512.8 132,519.0 140,522.2 148,517.5 156,512.8 164,512.8 172,512.2 180,508.4 188,503.3 196,494.8 204,484.8 212,472.5 220,460.2 228,448.9 236,448.0 244,446.6 252,445.5 260,445.1 268,446.1 276,446.1 284,446.1 292,446.1 300,446.1 308,446.1 316,448.0 324,448.9 332,448.9 340,448.5 348,448.0 356,447.4 364,447.0 372,447.0 380,446.6 388,446.1 396,445.6 404,444.8 412,443.9 420,443.9 428,443.9 436,443.9 444,443.7 452,441.8 460,440.6 468,440 476,439 484,439 492,439 500,439 508,439 516,439 524,439 532,439 540,439 548,439 556,439 564,439 572,439 580,439.5 588,440 596,440 604,439 612,439 620,439 628,439 636,439 644,439.5 652,441 660,442 668,442.5 676,444" fill="none" stroke="#00ffff" stroke-width="2" stroke-linejoin="miter" shape-rendering="crispEdges"/><polyline points="12,476.9 20,477.2 28,479.3 36,484.4 44,488.2 52,489.5 60,496.7 68,502.4 76,503.3 84,504.6 92,506.2 100,509.0 108,511.5 116,513.7 124,514.1 132,515.6 140,516.6 148,517.1 156,516.6 164,515.6 172,514.7 180,512.8 188,510.9 196,507.1 204,501.8 212,498.4 220,495.2 228,490.1 236,485.2 244,479.5 252,474.4 260,470.1 268,466.3 276,465.9 284,466.9 292,466.9 300,465.9 308,466.3 316,467.8 324,467.8 332,467.8 340,467.8 348,467.8 356,465.0 364,463.6 372,461.8 380,460.2 388,458.4 396,455.4 404,451.5 412,448.2 420,444.8 428,442.0 436,439.9 444,439.0 452,439.0 460,439 468,438.7 476,438 484,438 492,438 500,438 508,438 516,438 524,438 532,438 540,438 548,438 556,438 564,438 572,438 580,438 588,438 596,438 604,438 612,437.5 620,437 628,437 636,437 644,437 652,437.5 660,438 668,437.5 676,437" fill="none" stroke="#ffff00" stroke-width="2" stroke-linejoin="miter" shape-rendering="crispEdges"/></g><path d="M12 546v5h6z" fill="#708090"/><rect x="11.5" y="33.5" width="668" height="258" fill="none" stroke="#fff" stroke-width="1"/><rect x="11.5" y="293.5" width="668" height="128" fill="none" stroke="#fff" stroke-width="1"/><rect x="11.5" y="423.5" width="668" height="128" fill="none" stroke="#fff" stroke-width="1"/><path d="M15 40h7l-3.5 4z" fill="#fff"/><text transform="rotate(0.03 27 45)" x="27" y="45" font-size="9.8" letter-spacing="-0.2" word-spacing="0" fill="#fff" stroke="#fff" stroke-width="0.15" text-anchor="start" font-family="Liberation Sans, sans-serif" style="white-space:pre">EURUSD,Daily</text><text transform="rotate(0.03 97.5 45)" x="97.5" y="45" font-size="9.8" letter-spacing="-0.4" word-spacing="0" fill="#fff" stroke="#fff" stroke-width="0.15" text-anchor="start" font-family="Liberation Sans, sans-serif" style="white-space:pre">0.96718</text><text transform="rotate(0.03 133.4 45)" x="133.4" y="45" font-size="9.8" letter-spacing="-0.4" word-spacing="0" fill="#fff" stroke="#fff" stroke-width="0.15" text-anchor="start" font-family="Liberation Sans, sans-serif" style="white-space:pre">0.97086</text><text transform="rotate(0.03 169.2 45)" x="169.2" y="45" font-size="9.8" letter-spacing="-0.4" word-spacing="0" fill="#fff" stroke="#fff" stroke-width="0.15" text-anchor="start" font-family="Liberation Sans, sans-serif" style="white-space:pre">0.95520</text><text transform="rotate(0.03 204.5 45)" x="204.5" y="45" font-size="9.8" letter-spacing="-0.4" word-spacing="0" fill="#fff" stroke="#fff" stroke-width="0.15" text-anchor="start" font-family="Liberation Sans, sans-serif" style="white-space:pre">0.96537</text><text transform="rotate(0.03 15.6 306)" x="15.6" y="306" font-size="9.8" letter-spacing="-0.25" word-spacing="0" fill="#fff" stroke="#fff" stroke-width="0.15" text-anchor="start" font-family="Liberation Sans, sans-serif" style="white-space:pre">Momentum(14) 97.4826</text><text transform="rotate(0.03 15 436)" x="15" y="436" font-size="9.8" letter-spacing="-0.2" word-spacing="0" fill="#fff" stroke="#fff" stroke-width="0.15" text-anchor="start" font-family="Liberation Sans, sans-serif" style="white-space:pre">R1(26) -15.4  R1(52) -76.4</text><text transform="rotate(0.03 684.5 61)" x="684.5" y="61" font-size="9.8" letter-spacing="-0.4" word-spacing="0" fill="#fff" stroke="#fff" stroke-width="0.15" text-anchor="start" font-family="Liberation Sans, sans-serif" style="white-space:pre">1.34060</text><rect x="680" y="57" width="2" height="1" fill="#fff"/><text transform="rotate(0.03 684.5 94)" x="684.5" y="94" font-size="9.8" letter-spacing="-0.4" word-spacing="0" fill="#fff" stroke="#fff" stroke-width="0.15" text-anchor="start" font-family="Liberation Sans, sans-serif" style="white-space:pre">1.32020</text><rect x="680" y="90" width="2" height="1" fill="#fff"/><text transform="rotate(0.03 684.5 127)" x="684.5" y="127" font-size="9.8" letter-spacing="-0.4" word-spacing="0" fill="#fff" stroke="#fff" stroke-width="0.15" text-anchor="start" font-family="Liberation Sans, sans-serif" style="white-space:pre">1.29920</text><rect x="680" y="123" width="2" height="1" fill="#fff"/><text transform="rotate(0.03 684.5 160)" x="684.5" y="160" font-size="9.8" letter-spacing="-0.4" word-spacing="0" fill="#fff" stroke="#fff" stroke-width="0.15" text-anchor="start" font-family="Liberation Sans, sans-serif" style="white-space:pre">1.27880</text><rect x="680" y="156" width="2" height="1" fill="#fff"/><text transform="rotate(0.03 684.5 193)" x="684.5" y="193" font-size="9.8" letter-spacing="-0.4" word-spacing="0" fill="#fff" stroke="#fff" stroke-width="0.15" text-anchor="start" font-family="Liberation Sans, sans-serif" style="white-space:pre">1.25840</text><rect x="680" y="189" width="2" height="1" fill="#fff"/><text transform="rotate(0.03 684.5 226)" x="684.5" y="226" font-size="9.8" letter-spacing="-0.4" word-spacing="0" fill="#fff" stroke="#fff" stroke-width="0.15" text-anchor="start" font-family="Liberation Sans, sans-serif" style="white-space:pre">1.23740</text><rect x="680" y="222" width="2" height="1" fill="#fff"/><text transform="rotate(0.03 684.5 259)" x="684.5" y="259" font-size="9.8" letter-spacing="-0.4" word-spacing="0" fill="#fff" stroke="#fff" stroke-width="0.15" text-anchor="start" font-family="Liberation Sans, sans-serif" style="white-space:pre">1.21700</text><rect x="680" y="255" width="2" height="1" fill="#fff"/><text transform="rotate(0.03 684.5 292)" x="684.5" y="292" font-size="9.8" letter-spacing="-0.4" word-spacing="0" fill="#fff" stroke="#fff" stroke-width="0.15" text-anchor="start" font-family="Liberation Sans, sans-serif" style="white-space:pre">1.19660</text><rect x="680" y="288" width="2" height="1" fill="#fff"/><text transform="rotate(0.03 682.4 304)" x="682.4" y="304" font-size="9.8" letter-spacing="-0.25" word-spacing="0" fill="#fff" stroke="#fff" stroke-width="0.15" text-anchor="start" font-family="Liberation Sans, sans-serif" style="white-space:pre">104.3242</text><text transform="rotate(0.03 682.1 376)" x="682.1" y="376" font-size="9.8" letter-spacing="-0.4" word-spacing="0" fill="#fff" stroke="#fff" stroke-width="0.15" text-anchor="start" font-family="Liberation Sans, sans-serif" style="white-space:pre">100</text><text transform="rotate(0.03 682.4 418)" x="682.4" y="418" font-size="9.8" letter-spacing="-0.4" word-spacing="0" fill="#fff" stroke="#fff" stroke-width="0.15" text-anchor="start" font-family="Liberation Sans, sans-serif" style="white-space:pre">97.284</text><rect x="680" y="295" width="2" height="1" fill="#fff"/><text transform="rotate(0.03 682.5 434)" x="682.5" y="434" font-size="9.8" letter-spacing="-0.4" word-spacing="0" fill="#fff" stroke="#fff" stroke-width="0.15" text-anchor="start" font-family="Liberation Sans, sans-serif" style="white-space:pre">120</text><text transform="rotate(0.03 681.7 440)" x="681.7" y="440" font-size="9.8" letter-spacing="-0.4" word-spacing="0" fill="#fff" stroke="#fff" stroke-width="0.15" text-anchor="start" font-family="Liberation Sans, sans-serif" style="white-space:pre">100</text><text transform="rotate(0.03 681.5 451)" x="681.5" y="451" font-size="9.8" letter-spacing="-0.4" word-spacing="0" fill="#fff" stroke="#fff" stroke-width="0.15" text-anchor="start" font-family="Liberation Sans, sans-serif" style="white-space:pre">80</text><text transform="rotate(0.03 681.5 469)" x="681.5" y="469" font-size="9.8" letter-spacing="-0.4" word-spacing="0" fill="#fff" stroke="#fff" stroke-width="0.15" text-anchor="start" font-family="Liberation Sans, sans-serif" style="white-space:pre">50</text><text transform="rotate(0.03 683.2 497)" x="683.2" y="497" font-size="9.8" letter-spacing="-0.4" word-spacing="0" fill="#fff" stroke="#fff" stroke-width="0.15" text-anchor="start" font-family="Liberation Sans, sans-serif" style="white-space:pre">0.00</text><text transform="rotate(0.03 682 526)" x="682" y="526" font-size="9.8" letter-spacing="-0.4" word-spacing="0" fill="#fff" stroke="#fff" stroke-width="0.15" text-anchor="start" font-family="Liberation Sans, sans-serif" style="white-space:pre">-50</text><text transform="rotate(0.03 682 543)" x="682" y="543" font-size="9.8" letter-spacing="-0.4" word-spacing="0" fill="#fff" stroke="#fff" stroke-width="0.15" text-anchor="start" font-family="Liberation Sans, sans-serif" style="white-space:pre">-80</text><text transform="rotate(0.03 682.9 548)" x="682.9" y="548" font-size="9.8" letter-spacing="-0.4" word-spacing="0" fill="#fff" stroke="#fff" stroke-width="0.15" text-anchor="start" font-family="Liberation Sans, sans-serif" style="white-space:pre">-100</text><rect x="680" y="493" width="2" height="1" fill="#fff"/><rect x="12" y="552" width="1" height="3" fill="#fff"/><text transform="rotate(0.03 11 564)" x="11" y="564" font-size="9.8" letter-spacing="-0.1" word-spacing="0" fill="#fff" stroke="#fff" stroke-width="0.15" text-anchor="start" font-family="Liberation Sans, sans-serif" style="white-space:pre">19 Aug 2004</text><rect x="76" y="552" width="1" height="3" fill="#fff"/><text transform="rotate(0.03 75 564)" x="75" y="564" font-size="9.8" letter-spacing="-0.1" word-spacing="0" fill="#fff" stroke="#fff" stroke-width="0.15" text-anchor="start" font-family="Liberation Sans, sans-serif" style="white-space:pre">31 Aug 2004</text><rect x="140" y="552" width="1" height="3" fill="#fff"/><text transform="rotate(0.03 139 564)" x="139" y="564" font-size="9.8" letter-spacing="-0.1" word-spacing="0" fill="#fff" stroke="#fff" stroke-width="0.15" text-anchor="start" font-family="Liberation Sans, sans-serif" style="white-space:pre">10 Sep 2004</text><rect x="204" y="552" width="1" height="3" fill="#fff"/><text transform="rotate(0.03 203 564)" x="203" y="564" font-size="9.8" letter-spacing="-0.1" word-spacing="0" fill="#fff" stroke="#fff" stroke-width="0.15" text-anchor="start" font-family="Liberation Sans, sans-serif" style="white-space:pre">22 Sep 2004</text><rect x="268" y="552" width="1" height="3" fill="#fff"/><text transform="rotate(0.03 267 564)" x="267" y="564" font-size="9.8" letter-spacing="-0.1" word-spacing="0" fill="#fff" stroke="#fff" stroke-width="0.15" text-anchor="start" font-family="Liberation Sans, sans-serif" style="white-space:pre">4 Oct 2004</text><rect x="332" y="552" width="1" height="3" fill="#fff"/><text transform="rotate(0.03 331 564)" x="331" y="564" font-size="9.8" letter-spacing="-0.1" word-spacing="0" fill="#fff" stroke="#fff" stroke-width="0.15" text-anchor="start" font-family="Liberation Sans, sans-serif" style="white-space:pre">14 Oct 2004</text><rect x="396" y="552" width="1" height="3" fill="#fff"/><text transform="rotate(0.03 395 564)" x="395" y="564" font-size="9.8" letter-spacing="-0.1" word-spacing="0" fill="#fff" stroke="#fff" stroke-width="0.15" text-anchor="start" font-family="Liberation Sans, sans-serif" style="white-space:pre">26 Oct 2004</text><rect x="460" y="552" width="1" height="3" fill="#fff"/><text transform="rotate(0.03 459 564)" x="459" y="564" font-size="9.8" letter-spacing="-0.1" word-spacing="0" fill="#fff" stroke="#fff" stroke-width="0.15" text-anchor="start" font-family="Liberation Sans, sans-serif" style="white-space:pre">5 Nov 2004</text><rect x="524" y="552" width="1" height="3" fill="#fff"/><text transform="rotate(0.03 523 564)" x="523" y="564" font-size="9.8" letter-spacing="-0.1" word-spacing="0" fill="#fff" stroke="#fff" stroke-width="0.15" text-anchor="start" font-family="Liberation Sans, sans-serif" style="white-space:pre">17 Nov 2004</text><rect x="588" y="552" width="1" height="3" fill="#fff"/><text transform="rotate(0.03 587 564)" x="587" y="564" font-size="9.8" letter-spacing="-0.1" word-spacing="0" fill="#fff" stroke="#fff" stroke-width="0.15" text-anchor="start" font-family="Liberation Sans, sans-serif" style="white-space:pre">29 Nov 2004</text><rect x="652" y="552" width="1" height="3" fill="#fff"/><text transform="rotate(0.03 651 564)" x="651" y="564" font-size="9.8" letter-spacing="-0.1" word-spacing="0" fill="#fff" stroke="#fff" stroke-width="0.15" text-anchor="start" font-family="Liberation Sans, sans-serif" style="white-space:pre">9 Dec 2004</text>
</svg></body></html>
